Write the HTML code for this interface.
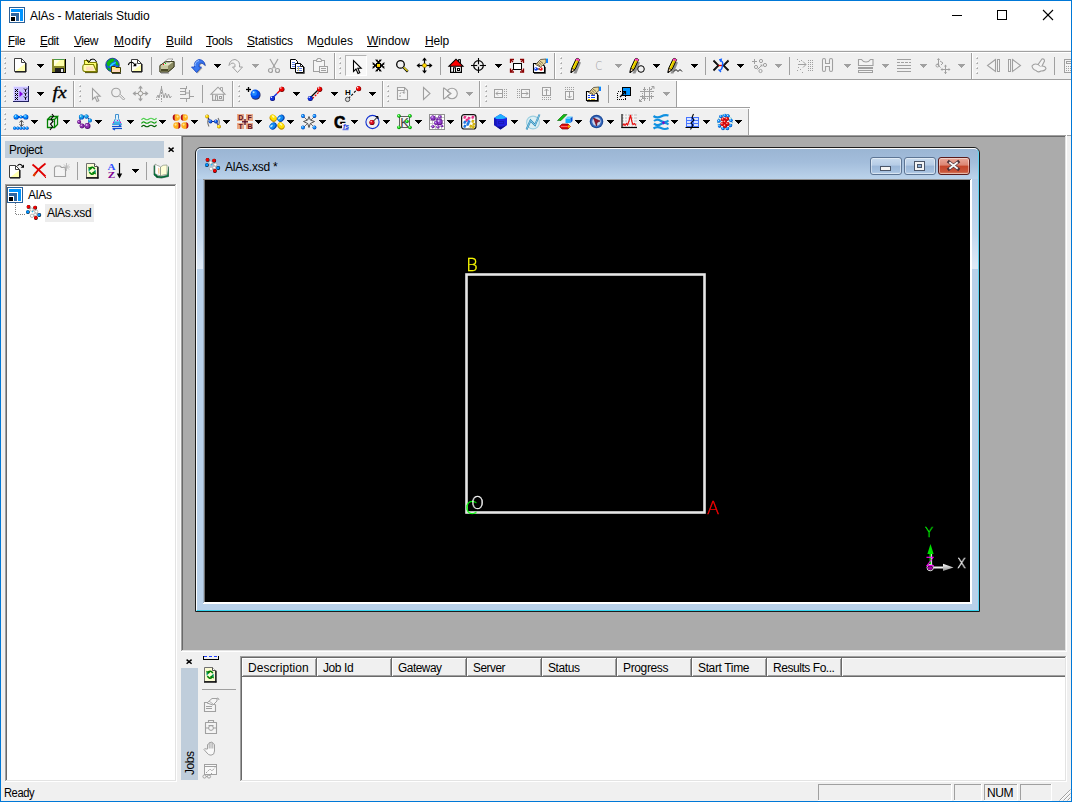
<!DOCTYPE html>
<html lang="en"><head><meta charset="utf-8"><title>AlAs - Materials Studio</title>
<style>
html,body{margin:0;padding:0;}
body{width:1072px;height:802px;overflow:hidden;background:#f0f0f0;font-family:"Liberation Sans",sans-serif;font-size:12px;}
#app{position:relative;width:1072px;height:802px;overflow:hidden;background:#f0f0f0;}
#app div,#app span,#app svg{position:absolute;}
.t{white-space:nowrap;line-height:14px;height:14px;}
.t u{text-decoration:underline;text-underline-offset:1px;text-decoration-thickness:1px;}
svg{overflow:visible;}
.c{shape-rendering:crispEdges;}
</style></head><body><div id="app">
<div style="left:0px;top:0px;width:1072px;height:51px;background:#ffffff;"></div>
<svg style="left:9px;top:7px;" width="16" height="16" viewBox="0 0 16 16"><rect class="c" x="0.5" y="0.5" width="15" height="15" fill="#fff" stroke="#2b5f96" stroke-width="1"/><rect class="c" x="2" y="2" width="12" height="12" fill="#0094ff" /><rect class="c" x="2" y="5" width="9" height="9" fill="#fff" /><rect class="c" x="2" y="6" width="8" height="8" fill="#2f65a0" /><rect class="c" x="2" y="9" width="5" height="5" fill="#fff" /><rect class="c" x="2" y="10" width="4" height="4" fill="#000" /></svg>
<span class="t" style="left:30px;top:9px;font-size:12px;color:#000;letter-spacing:-0.08px;">AlAs - Materials Studio</span>
<svg style="left:952px;top:10px;" width="10" height="10" viewBox="0 0 10 10"><line x1="0" y1="5.5" x2="10" y2="5.5" stroke="#000" stroke-width="1" class="c"/></svg>
<svg style="left:997px;top:10px;" width="10" height="10" viewBox="0 0 10 10"><rect class="c" x="0.5" y="0.5" width="9" height="9" fill="none" stroke="#000" stroke-width="1"/></svg>
<svg style="left:1043px;top:10px;" width="10" height="10" viewBox="0 0 10 10"><line x1="0" y1="0" x2="10" y2="10" stroke="#000" stroke-width="1.1" /><line x1="10" y1="0" x2="0" y2="10" stroke="#000" stroke-width="1.1" /></svg>
<span class="t" style="left:8.0px;top:34px;font-size:12px;color:#000;letter-spacing:-0.45px;transform:scaleX(0.967);transform-origin:0 0;"><u>F</u>ile</span>
<span class="t" style="left:40.0px;top:34px;font-size:12px;color:#000;letter-spacing:-0.45px;transform:scaleX(0.985);transform-origin:0 0;"><u>E</u>dit</span>
<span class="t" style="left:74px;top:34px;font-size:12px;color:#000;letter-spacing:-0.45px;"><u>V</u>iew</span>
<span class="t" style="left:114px;top:34px;font-size:12px;color:#000;letter-spacing:0.33px;"><u>M</u>odify</span>
<span class="t" style="left:166px;top:34px;font-size:12px;color:#000;letter-spacing:-0.08px;"><u>B</u>uild</span>
<span class="t" style="left:206px;top:34px;font-size:12px;color:#000;letter-spacing:-0.3px;"><u>T</u>ools</span>
<span class="t" style="left:247px;top:34px;font-size:12px;color:#000;letter-spacing:-0.22px;"><u>S</u>tatistics</span>
<span class="t" style="left:307px;top:34px;font-size:12px;color:#000;letter-spacing:0.11px;">M<u>o</u>dules</span>
<span class="t" style="left:367px;top:34px;font-size:12px;color:#000;letter-spacing:-0.0px;"><u>W</u>indow</span>
<span class="t" style="left:425px;top:34px;font-size:12px;color:#000;letter-spacing:-0.14px;"><u>H</u>elp</span>
<div style="left:0px;top:50px;width:1072px;height:1px;background:#f0f0f0;"></div>
<div style="left:0px;top:51px;width:1072px;height:1px;background:#a0a0a0;"></div>
<div style="left:0px;top:52px;width:1072px;height:1px;background:#ffffff;"></div>
<div style="left:0px;top:79px;width:1072px;height:1px;background:#a0a0a0;"></div>
<div style="left:0px;top:80px;width:1072px;height:1px;background:#ffffff;"></div>
<div style="left:0px;top:107px;width:1072px;height:1px;background:#a0a0a0;"></div>
<div style="left:0px;top:108px;width:1072px;height:1px;background:#ffffff;"></div>
<div style="left:0px;top:135px;width:1072px;height:1px;background:#a0a0a0;"></div>
<div style="left:677px;top:80px;width:395px;height:27px;background:#ffffff;"></div>
<div style="left:750px;top:107px;width:322px;height:28px;background:#ffffff;"></div>
<div style="left:677px;top:107px;width:73px;height:1px;background:#a0a0a0;"></div>
<div style="left:0px;top:107px;width:750px;height:1px;background:#a0a0a0;"></div>
<div style="left:345px;top:55px;width:22px;height:21px;background:#f8f8f8;border:1px solid #b4b4b4;border-right-color:#fff;border-bottom-color:#fff;box-sizing:border-box;"></div>
<div style="left:4px;top:56px;width:2px;height:2px;background:#fafafa;"></div>
<div style="left:5px;top:57px;width:1px;height:2px;background:#c4c4c4;"></div>
<div style="left:4px;top:58px;width:2px;height:1px;background:#c4c4c4;"></div>
<div style="left:5px;top:58px;width:1px;height:1px;background:#a8a8a8;"></div>
<div style="left:4px;top:61px;width:2px;height:2px;background:#fafafa;"></div>
<div style="left:5px;top:62px;width:1px;height:2px;background:#c4c4c4;"></div>
<div style="left:4px;top:63px;width:2px;height:1px;background:#c4c4c4;"></div>
<div style="left:5px;top:63px;width:1px;height:1px;background:#a8a8a8;"></div>
<div style="left:4px;top:66px;width:2px;height:2px;background:#fafafa;"></div>
<div style="left:5px;top:67px;width:1px;height:2px;background:#c4c4c4;"></div>
<div style="left:4px;top:68px;width:2px;height:1px;background:#c4c4c4;"></div>
<div style="left:5px;top:68px;width:1px;height:1px;background:#a8a8a8;"></div>
<div style="left:4px;top:71px;width:2px;height:2px;background:#fafafa;"></div>
<div style="left:5px;top:72px;width:1px;height:2px;background:#c4c4c4;"></div>
<div style="left:4px;top:73px;width:2px;height:1px;background:#c4c4c4;"></div>
<div style="left:5px;top:73px;width:1px;height:1px;background:#a8a8a8;"></div>
<svg style="left:13px;top:58px;" width="16" height="16" viewBox="0 0 16 16"><path d="M1.5 0.5H8.5L12.5 4.5V13.5H1.5Z" fill="#fff" stroke="#404040" stroke-width="1" /><path d="M2.5 13L12 5.800000000000001V13Z" fill="#ffffb0" /><path d="M8.5 0.5V4.5H12.5" fill="none" stroke="#404040" stroke-width="1" /><path d="M2 14H13V5" fill="none" stroke="#000" stroke-width="1" /></svg>
<svg style="left:37px;top:64px;" width="7" height="4" viewBox="0 0 7 4"><path class="c" d="M0 0h7v1h-1v1h-1v1h-1v1h-1v-1h-1v-1h-1v-1h-1z" fill="#000"/></svg>
<svg style="left:51px;top:58px;" width="16" height="16" viewBox="0 0 16 16"><rect class="c" x="1" y="1" width="14" height="14" fill="#000" /><rect class="c" x="1" y="1" width="13" height="13" fill="#8a8a2a" /><rect class="c" x="3" y="1" width="10" height="7" fill="#ffffb0" /><rect class="c" x="3" y="1" width="10" height="1" fill="#4a9a4a" /><path d="M3 2H13V8H3Z" fill="#ffffa8" /><path d="M3 2H9L3 8Z" fill="#fff" opacity=".7"/><rect class="c" x="4" y="10" width="9" height="5" fill="#202020" /><rect class="c" x="10" y="11" width="2" height="3" fill="#e8e8e8" /><rect class="c" x="14" y="2" width="1" height="13" fill="#000" /><rect class="c" x="2" y="14" width="13" height="1" fill="#000" /></svg>
<div style="left:74px;top:57px;width:1px;height:18px;background:#a0a0a0;"></div>
<svg style="left:82px;top:58px;" width="16" height="16" viewBox="0 0 16 16"><path d="M2.5 2.5H6L8 4.5H14.5V13.5H2.5Z" fill="#ffff70" stroke="#808000" stroke-width="1.1" /><path d="M2.5 6.5H11.5L14.5 13.5H3Q0.8 13.5 0.8 11V8.5Q0.8 6.5 2.5 6.5Z" fill="#ffffb0" stroke="#808000" stroke-width="1.1" /><path d="M4 8.5H10.5L12.5 12.5H4Z" fill="#ffc8c8" opacity=".6"/><path d="M14.5 4Q12.5 -0.5 8 2" fill="none" stroke="#000" stroke-width="1" /><path d="M4.5 1.5L6.5 4.5L9 1.5" fill="none" stroke="#000" stroke-width="1" /><line x1="3" y1="14.6" x2="15.2" y2="14.6" stroke="#505000" stroke-width="1" /><line x1="15.3" y1="5.5" x2="15.3" y2="14.5" stroke="#505000" stroke-width="1" /></svg>
<svg style="left:105px;top:58px;" width="16" height="16" viewBox="0 0 16 16"><circle cx="7.5" cy="7" r="6.8" fill="#1060e0"/><path d="M1.5 5Q4 0.5 8.5 0.5Q10.5 2 8 4Q5 4.5 4.5 8Q2.5 9.5 1.5 5Z" fill="#10b810" /><path d="M2 9.5Q4 9 5.5 11Q5 13.5 3.5 12.5Z" fill="#10b810" /><path d="M10 2Q13.5 3.5 14 7.5Q12 8 10.5 6Q11.5 4 10 2Z" fill="#10b810" /><path d="M4.5 8Q7 4.5 10.5 4L11 5Q8 6 6 9Z" fill="#20e0ff" /><circle cx="7.5" cy="7" r="6.8" fill="none" stroke="#102870" stroke-width="0.7"/><path d="M6.5 8.5H10L11 9.5H15.5V14.5H6.5Z" fill="#ffe880" stroke="#404000" stroke-width="1" /><path d="M7.2 11.5H15V14H7.2Z" fill="#ffd8c0" /><line x1="7" y1="15.3" x2="16" y2="15.3" stroke="#000" stroke-width="0.9" /></svg>
<svg style="left:128px;top:58px;" width="16" height="16" viewBox="0 0 16 16"><path d="M3.5 1.5H9.5L13.5 5.5V13.5H3.5Z" fill="#fff" stroke="#404040" stroke-width="1" /><path d="M4.5 13L13 6.5200000000000005V13Z" fill="#ffffb0" /><path d="M9.5 1.5V5.5H13.5" fill="none" stroke="#404040" stroke-width="1" /><path d="M4 14H14V6" fill="none" stroke="#000" stroke-width="1" /><path d="M0.3 7Q1.5 3.5 4.5 4.5Q6 5 6.8 7" fill="none" stroke="#000" stroke-width="1.1" /><path d="M4.8 8.3H8.3V4.8Z" fill="#000" /></svg>
<div style="left:151px;top:57px;width:1px;height:18px;background:#a0a0a0;"></div>
<svg style="left:159px;top:58px;" width="16" height="16" viewBox="0 0 16 16"><path d="M1 7.5L7 3.5H15V9L9 14H1Z" fill="#a8a880" stroke="#3a3a20" stroke-width="0.9" /><path d="M1 7.5L7 3.5H15L9 8Z" fill="#e4e4c4" /><path d="M5 4L9 1H14L10.5 4.5Z" fill="#fff" stroke="#777" stroke-width="0.6" /><path d="M1 7.5H9V14H1Z" fill="#c8c8a0" /><path d="M9 8L15 3.5V9L9 14Z" fill="#8a8a62" /><rect class="c" x="2" y="11" width="7" height="2" fill="#4a4a28" /><rect class="c" x="2" y="13" width="7" height="1" fill="#a0a070" /><rect class="c" x="4" y="6" width="1" height="1" fill="#f00" /><rect class="c" x="6" y="5" width="1" height="1" fill="#0c0" /><path d="M1 7.5L7 3.5H15V9L9 14H1Z" fill="none" stroke="#3a3a20" stroke-width="0.9" /><line x1="2" y1="15" x2="10" y2="15" stroke="#777" stroke-width="1" /></svg>
<div style="left:182px;top:57px;width:1px;height:18px;background:#a0a0a0;"></div>
<svg style="left:190px;top:58px;" width="16" height="16" viewBox="0 0 16 16"><g transform="translate(1 1)" opacity=".55"><g><path d="M6.5 14.5L1.5 9H4.5Q3.5 3 9 1.5Q14.5 2 15 7.5Q13 4.5 10.5 5Q8.5 6 9 9H11.5Z" fill="#606060" /></g></g><g><path d="M6.5 14.5L1.5 9H4.5Q3.5 3 9 1.5Q14.5 2 15 7.5Q13 4.5 10.5 5Q8.5 6 9 9H11.5Z" fill="#3a78f0" stroke="#1040c0" stroke-width="0.8" /></g><path d="M5 8Q4.5 4 9 2.5" fill="none" stroke="#a0c8ff" stroke-width="1" /></svg>
<svg style="left:214px;top:64px;" width="7" height="4" viewBox="0 0 7 4"><path class="c" d="M0 0h7v1h-1v1h-1v1h-1v1h-1v-1h-1v-1h-1v-1h-1z" fill="#000"/></svg>
<svg style="left:228px;top:58px;" width="16" height="16" viewBox="0 0 16 16"><g transform="translate(16 0) scale(-1 1)"><path d="M6.5 14.5L1.5 9H4.5Q3.5 3 9 1.5Q14.5 2 15 7.5Q13 4.5 10.5 5Q8.5 6 9 9H11.5Z" fill="#f4f4f4" stroke="#a0a0a0" stroke-width="1" /></g></svg>
<svg style="left:252px;top:64px;" width="7" height="4" viewBox="0 0 7 4"><path class="c" d="M0 0h7v1h-1v1h-1v1h-1v1h-1v-1h-1v-1h-1v-1h-1z" fill="#a0a0a0"/></svg>
<svg style="left:266px;top:58px;" width="16" height="16" viewBox="0 0 16 16"><line x1="4" y1="1" x2="9.5" y2="10.5" stroke="#a0a0a0" stroke-width="1.2" /><line x1="12" y1="1" x2="6.5" y2="10.5" stroke="#a0a0a0" stroke-width="1.2" /><circle cx="4.5" cy="12.5" r="2" fill="none" stroke="#a0a0a0" stroke-width="1.2"/><circle cx="11.5" cy="12.5" r="2" fill="none" stroke="#a0a0a0" stroke-width="1.2"/></svg>
<svg style="left:289px;top:58px;" width="16" height="16" viewBox="0 0 16 16"><path d="M1.5 1.5H6.5L8.5 3.5V10.5H1.5Z" fill="#fff" stroke="#000" stroke-width="1" /><rect class="c" x="3" y="4" width="3" height="1" fill="#6080e0" /><rect class="c" x="3" y="6" width="4" height="1" fill="#6080e0" /><rect class="c" x="3" y="8" width="4" height="1" fill="#6080e0" /><path d="M6.5 5.5H11.5L14.5 8.5V14.5H6.5Z" fill="#fff" stroke="#000" stroke-width="1" /><path d="M11.5 5.5V8.5H14.5" fill="none" stroke="#000" stroke-width="0.9" /><rect class="c" x="8" y="8" width="3" height="1" fill="#6080e0" /><rect class="c" x="8" y="10" width="5" height="1" fill="#6080e0" /><rect class="c" x="8" y="12" width="5" height="1" fill="#6080e0" /><rect class="c" x="9" y="9" width="1" height="4" fill="#d0c060" /><line x1="7" y1="15.3" x2="15.3" y2="15.3" stroke="#000" stroke-width="0.8" /><line x1="15.2" y1="9" x2="15.2" y2="15.5" stroke="#000" stroke-width="0.8" /></svg>
<svg style="left:312px;top:58px;" width="16" height="16" viewBox="0 0 16 16"><rect class="c" x="1.6" y="2.6" width="10.8" height="10.8" fill="#f4f4f4" stroke="#a0a0a0" stroke-width="1.2"/><path d="M4.5 3.5V1.5H5.5V0.5H8.5V1.5H9.5V3.5Z" fill="#f4f4f4" stroke="#a0a0a0" stroke-width="1" /><rect class="c" x="7.6" y="8.6" width="7.8" height="5.8" fill="#f4f4f4" stroke="#a0a0a0" stroke-width="1.2"/><line x1="9" y1="10.5" x2="14" y2="10.5" stroke="#a0a0a0" stroke-width="1" /><line x1="9" y1="12.5" x2="14" y2="12.5" stroke="#a0a0a0" stroke-width="1" /></svg>
<div style="left:334px;top:53px;width:1px;height:26px;background:#a0a0a0;"></div>
<div style="left:335px;top:53px;width:1px;height:26px;background:#ffffff;"></div>
<div style="left:339px;top:56px;width:2px;height:2px;background:#fafafa;"></div>
<div style="left:340px;top:57px;width:1px;height:2px;background:#c4c4c4;"></div>
<div style="left:339px;top:58px;width:2px;height:1px;background:#c4c4c4;"></div>
<div style="left:340px;top:58px;width:1px;height:1px;background:#a8a8a8;"></div>
<div style="left:339px;top:61px;width:2px;height:2px;background:#fafafa;"></div>
<div style="left:340px;top:62px;width:1px;height:2px;background:#c4c4c4;"></div>
<div style="left:339px;top:63px;width:2px;height:1px;background:#c4c4c4;"></div>
<div style="left:340px;top:63px;width:1px;height:1px;background:#a8a8a8;"></div>
<div style="left:339px;top:66px;width:2px;height:2px;background:#fafafa;"></div>
<div style="left:340px;top:67px;width:1px;height:2px;background:#c4c4c4;"></div>
<div style="left:339px;top:68px;width:2px;height:1px;background:#c4c4c4;"></div>
<div style="left:340px;top:68px;width:1px;height:1px;background:#a8a8a8;"></div>
<div style="left:339px;top:71px;width:2px;height:2px;background:#fafafa;"></div>
<div style="left:340px;top:72px;width:1px;height:2px;background:#c4c4c4;"></div>
<div style="left:339px;top:73px;width:2px;height:1px;background:#c4c4c4;"></div>
<div style="left:340px;top:73px;width:1px;height:1px;background:#a8a8a8;"></div>
<svg style="left:349px;top:58px;" width="16" height="16" viewBox="0 0 16 16"><path d="M4.5 2.5V13.5L7 11L9 15.5L10.8 14.7L8.8 10.3H12.2Z" fill="#fff" stroke="#000" stroke-width="1.1" /></svg>
<svg style="left:371px;top:58px;" width="16" height="16" viewBox="0 0 16 16"><line x1="7.5" y1="3" x2="7.5" y2="12" stroke="#000" stroke-width="1.4" /><line x1="3" y1="7.5" x2="12" y2="7.5" stroke="#000" stroke-width="1.4" /><path d="M4.800000000000001 7.3L2.2 5.3L2.4000000000000004 6.9" fill="none" stroke="#000" stroke-width="1.1" /><path d="M4.800000000000001 7.7L2.2 9.7L2.4000000000000004 8.1" fill="none" stroke="#000" stroke-width="1.1" /><path d="M10.200000000000001 7.7L12.8 9.7L12.600000000000001 8.1" fill="none" stroke="#000" stroke-width="1.1" /><path d="M10.200000000000001 7.3L12.8 5.3L12.600000000000001 6.9" fill="none" stroke="#000" stroke-width="1.1" /><path d="M7.7 4.800000000000001L9.7 2.2L8.1 2.4000000000000004" fill="none" stroke="#000" stroke-width="1.1" /><path d="M7.3 4.800000000000001L5.3 2.2L6.9 2.4000000000000004" fill="none" stroke="#000" stroke-width="1.1" /><path d="M7.3 10.200000000000001L5.3 12.8L6.9 12.600000000000001" fill="none" stroke="#000" stroke-width="1.1" /><path d="M7.7 10.200000000000001L9.7 12.8L8.1 12.600000000000001" fill="none" stroke="#000" stroke-width="1.1" /><rect class="c" x="5" y="5" width="5" height="5" fill="#000" /><rect class="c" x="6" y="6" width="3" height="3" fill="#ffe000" /><rect class="c" x="6" y="8" width="3" height="1" fill="#ffc000" /></svg>
<svg style="left:394px;top:58px;" width="16" height="16" viewBox="0 0 16 16"><circle cx="6.5" cy="6.4" r="3.8" fill="none" stroke="#000" stroke-width="1.3"/><line x1="9.6" y1="9.5" x2="13.8" y2="13.7" stroke="#000" stroke-width="2.4" /><line x1="9.7" y1="9.2" x2="13.6" y2="13.1" stroke="#f0e020" stroke-width="1.3" /></svg>
<svg style="left:417px;top:58px;" width="16" height="16" viewBox="0 0 16 16"><g transform="translate(-.5 -.5)"><line x1="8" y1="1" x2="8" y2="15" stroke="#000" stroke-width="1.2" /><line x1="1" y1="8" x2="15" y2="8" stroke="#000" stroke-width="1.2" /><path d="M8 0L10.4 3.12L5.6 3.12Z" fill="#000" /><path d="M8 16L5.6 12.879999999999999L10.4 12.879999999999999Z" fill="#000" /><path d="M0 8L3.12 5.6L3.12 10.4Z" fill="#000" /><path d="M16 8L12.879999999999999 10.4L12.879999999999999 5.6Z" fill="#000" /><circle cx="8" cy="8" r="2.1" fill="#ffd800" stroke="#806000" stroke-width="0.6"/></g></svg>
<div style="left:440px;top:57px;width:1px;height:18px;background:#a0a0a0;"></div>
<svg style="left:448px;top:58px;" width="16" height="16" viewBox="0 0 16 16"><path d="M10.5 4V1.5H12.5V6" fill="#a0a0a0" stroke="#000" stroke-width="0.9" /><path d="M2.6 8V14.4H13.4V8" fill="#fff" stroke="#000" stroke-width="1.2" /><path d="M1 8.2L8 1.2L15 8.2Z" fill="#f00" stroke="#000" stroke-width="1.1" /><path d="M5.5 14V9.8H7.5V14" fill="#fff" stroke="#000" stroke-width="1.1" /><rect class="c" x="9.5" y="10.0" width="2" height="2" fill="#fff" stroke="#000" stroke-width="1"/></svg>
<svg style="left:470px;top:58px;" width="16" height="16" viewBox="0 0 16 16"><circle cx="8.5" cy="7.5" r="4.8" fill="none" stroke="#000" stroke-width="1.2"/><line x1="8.5" y1="0" x2="8.5" y2="15" stroke="#000" stroke-width="1.1" /><line x1="1" y1="7.5" x2="16" y2="7.5" stroke="#000" stroke-width="1.1" /><circle cx="8.5" cy="7.5" r="1.3" fill="#f0f0f0"/></svg>
<svg style="left:495px;top:64px;" width="7" height="4" viewBox="0 0 7 4"><path class="c" d="M0 0h7v1h-1v1h-1v1h-1v1h-1v-1h-1v-1h-1v-1h-1z" fill="#000"/></svg>
<svg style="left:509px;top:58px;" width="16" height="16" viewBox="0 0 16 16"><rect class="c" x="4.7" y="5.7" width="7.6" height="5.6" fill="#fff" stroke="#000" stroke-width="1.4"/><path d="M1.5 5V1.5H5" fill="none" stroke="#8a0000" stroke-width="1.3" /><path d="M11 1.5H14.5V5" fill="none" stroke="#8a0000" stroke-width="1.3" /><path d="M1.5 10.5V14H5" fill="none" stroke="#8a0000" stroke-width="1.3" /><path d="M11 14H14.5V10.5" fill="none" stroke="#8a0000" stroke-width="1.3" /><path d="M1.5 1.5L4 4" fill="none" stroke="#8a0000" stroke-width="1.3" /><path d="M14.5 1.5L12 4" fill="none" stroke="#8a0000" stroke-width="1.3" /><path d="M1.5 14L4 11.5" fill="none" stroke="#8a0000" stroke-width="1.3" /><path d="M14.5 14L12 11.5" fill="none" stroke="#8a0000" stroke-width="1.3" /></svg>
<svg style="left:532px;top:58px;" width="16" height="16" viewBox="0 0 16 16"><path d="M1.5 5.5H9L12.5 8V14.5H1.5Z" fill="#fff" stroke="#000" stroke-width="1.1" /><line x1="2" y1="15.5" x2="13.5" y2="15.5" stroke="#555" stroke-width="1" /><line x1="13.5" y1="9" x2="13.5" y2="15.5" stroke="#555" stroke-width="1" /><line x1="4" y1="11" x2="9" y2="11" stroke="#000" stroke-width="1" /><circle cx="4" cy="11" r="1.8" fill="#1040f0"/><circle cx="9" cy="11" r="1.8" fill="#f01010"/><circle cx="3.5" cy="10.5" r="0.6" fill="#fff"/><circle cx="8.5" cy="10.5" r="0.6" fill="#fff"/><path d="M3.5 6.5L8.5 1.5L14 1V4.5L10.5 7.5L8.5 9Z" fill="#e8d8a0" stroke="#4a4030" stroke-width="0.8" /><path d="M5 5.5L8 8M6.5 4.2L9.5 6.8M8 3L11 5.5" fill="none" stroke="#605030" stroke-width="0.8" /><rect class="c" x="14" y="0" width="2" height="5" fill="#1080ff" /><rect class="c" x="14" y="0" width="2" height="1" fill="#80e0ff" /></svg>
<div style="left:554px;top:53px;width:1px;height:26px;background:#a0a0a0;"></div>
<div style="left:555px;top:53px;width:1px;height:26px;background:#ffffff;"></div>
<div style="left:560px;top:56px;width:2px;height:2px;background:#fafafa;"></div>
<div style="left:561px;top:57px;width:1px;height:2px;background:#c4c4c4;"></div>
<div style="left:560px;top:58px;width:2px;height:1px;background:#c4c4c4;"></div>
<div style="left:561px;top:58px;width:1px;height:1px;background:#a8a8a8;"></div>
<div style="left:560px;top:61px;width:2px;height:2px;background:#fafafa;"></div>
<div style="left:561px;top:62px;width:1px;height:2px;background:#c4c4c4;"></div>
<div style="left:560px;top:63px;width:2px;height:1px;background:#c4c4c4;"></div>
<div style="left:561px;top:63px;width:1px;height:1px;background:#a8a8a8;"></div>
<div style="left:560px;top:66px;width:2px;height:2px;background:#fafafa;"></div>
<div style="left:561px;top:67px;width:1px;height:2px;background:#c4c4c4;"></div>
<div style="left:560px;top:68px;width:2px;height:1px;background:#c4c4c4;"></div>
<div style="left:561px;top:68px;width:1px;height:1px;background:#a8a8a8;"></div>
<div style="left:560px;top:71px;width:2px;height:2px;background:#fafafa;"></div>
<div style="left:561px;top:72px;width:1px;height:2px;background:#c4c4c4;"></div>
<div style="left:560px;top:73px;width:2px;height:1px;background:#c4c4c4;"></div>
<div style="left:561px;top:73px;width:1px;height:1px;background:#a8a8a8;"></div>
<svg style="left:568px;top:58px;" width="16" height="16" viewBox="0 0 16 16"><g transform="translate(0 0)"><path d="M5.5 15.5L10.5 3.5L13 4.5L8.5 15.5Z" fill="#909090" /><path d="M3 14.8L3.6 10.5L8.2 0.8Q9.8 -0.3 11.6 1.6L7 11.6Z" fill="#ffe800" stroke="#000" stroke-width="1" /><path d="M8.2 0.8Q9.8 -0.3 11.6 1.6L10.8 3.4L7.5 2.2Z" fill="#ff40c0" /><path d="M3.6 10.5L7 11.6L3 14.8Z" fill="#f8d8b0" stroke="#000" stroke-width="0.8" /><path d="M3 14.8L3.3 12.8L4.5 13.6Z" fill="#000" /><line x1="6" y1="10.5" x2="10" y2="2" stroke="#c0a000" stroke-width="0.8" /></g></svg>
<svg style="left:591px;top:58px;" width="16" height="16" viewBox="0 0 16 16"><text x="4.3" y="11.8" font-size="11.5" font-weight="200" font-family="DejaVu Sans Light, DejaVu Sans, sans-serif" fill="#9c9c9c" textLength="7" lengthAdjust="spacingAndGlyphs">C</text></svg>
<svg style="left:615px;top:64px;" width="7" height="4" viewBox="0 0 7 4"><path class="c" d="M0 0h7v1h-1v1h-1v1h-1v1h-1v-1h-1v-1h-1v-1h-1z" fill="#a0a0a0"/></svg>
<svg style="left:629px;top:58px;" width="16" height="16" viewBox="0 0 16 16"><g transform="translate(-2 0)"><path d="M5.5 15.5L10.5 3.5L13 4.5L8.5 15.5Z" fill="#909090" /><path d="M3 14.8L3.6 10.5L8.2 0.8Q9.8 -0.3 11.6 1.6L7 11.6Z" fill="#ffe800" stroke="#000" stroke-width="1" /><path d="M8.2 0.8Q9.8 -0.3 11.6 1.6L10.8 3.4L7.5 2.2Z" fill="#ff40c0" /><path d="M3.6 10.5L7 11.6L3 14.8Z" fill="#f8d8b0" stroke="#000" stroke-width="0.8" /><path d="M3 14.8L3.3 12.8L4.5 13.6Z" fill="#000" /><line x1="6" y1="10.5" x2="10" y2="2" stroke="#c0a000" stroke-width="0.8" /></g><circle cx="12" cy="11" r="3.3" fill="#f0f0f0" stroke="#000" stroke-width="1"/></svg>
<svg style="left:653px;top:64px;" width="7" height="4" viewBox="0 0 7 4"><path class="c" d="M0 0h7v1h-1v1h-1v1h-1v1h-1v-1h-1v-1h-1v-1h-1z" fill="#000"/></svg>
<svg style="left:667px;top:58px;" width="16" height="16" viewBox="0 0 16 16"><g transform="translate(-2 0)"><path d="M5.5 15.5L10.5 3.5L13 4.5L8.5 15.5Z" fill="#909090" /><path d="M3 14.8L3.6 10.5L8.2 0.8Q9.8 -0.3 11.6 1.6L7 11.6Z" fill="#ffe800" stroke="#000" stroke-width="1" /><path d="M8.2 0.8Q9.8 -0.3 11.6 1.6L10.8 3.4L7.5 2.2Z" fill="#ff40c0" /><path d="M3.6 10.5L7 11.6L3 14.8Z" fill="#f8d8b0" stroke="#000" stroke-width="0.8" /><path d="M3 14.8L3.3 12.8L4.5 13.6Z" fill="#000" /><line x1="6" y1="10.5" x2="10" y2="2" stroke="#c0a000" stroke-width="0.8" /></g><path d="M7 13.5L9 11.5L11 13.5L13 11.5L15 13.5" fill="none" stroke="#000" stroke-width="1" /></svg>
<svg style="left:691px;top:64px;" width="7" height="4" viewBox="0 0 7 4"><path class="c" d="M0 0h7v1h-1v1h-1v1h-1v1h-1v-1h-1v-1h-1v-1h-1z" fill="#000"/></svg>
<div style="left:705px;top:57px;width:1px;height:18px;background:#a0a0a0;"></div>
<svg style="left:713px;top:58px;" width="16" height="16" viewBox="0 0 16 16"><path d="M0.5 2.5L5.5 7.5L0.5 12.5" fill="none" stroke="#000" stroke-width="1.8" /><path d="M15.5 2.5L10.5 7.5L15.5 12.5" fill="none" stroke="#000" stroke-width="1.8" /><path d="M0.5 2L6 7.5L0.5 13" fill="none" stroke="#888" stroke-width="0.6" stroke-dasharray="1 1"/><path d="M15.5 2L10 7.5L15.5 13" fill="none" stroke="#888" stroke-width="0.6" stroke-dasharray="1 1"/><line x1="5.5" y1="7.5" x2="9" y2="7.5" stroke="#f00000" stroke-width="1.3" /><path d="M7 2.5Q10.5 3 9.5 7.5Q9 12 6.5 12.5" fill="none" stroke="#1060ff" stroke-width="1.5" /><path d="M6 1.2L9.24 0.5700000000000001L7.4399999999999995 4.17Z" fill="#1060ff" /><path d="M8.5 0.5L6 1.5L8.5 3.5Z" fill="#1060ff" /><path d="M5.5 11.5L8 14" fill="none" stroke="#1060ff" stroke-width="1.3" /></svg>
<svg style="left:737px;top:64px;" width="7" height="4" viewBox="0 0 7 4"><path class="c" d="M0 0h7v1h-1v1h-1v1h-1v1h-1v-1h-1v-1h-1v-1h-1z" fill="#000"/></svg>
<svg style="left:751px;top:58px;" width="16" height="16" viewBox="0 0 16 16"><line x1="1" y1="3.5" x2="6" y2="3.5" stroke="#a0a0a0" stroke-width="1" /><line x1="3.5" y1="1" x2="3.5" y2="6" stroke="#a0a0a0" stroke-width="1" /><circle cx="10" cy="3" r="1.6" fill="none" stroke="#a0a0a0" stroke-width="1"/><circle cx="14" cy="7" r="1.6" fill="none" stroke="#a0a0a0" stroke-width="1"/><circle cx="5" cy="9" r="1.6" fill="none" stroke="#a0a0a0" stroke-width="1"/><circle cx="9.5" cy="13" r="1.6" fill="none" stroke="#a0a0a0" stroke-width="1"/><line x1="6.5" y1="11.5" x2="11" y2="7" stroke="#a0a0a0" stroke-width="1" /><path d="M11.5 6.5L11.184999999999999 8.915L9.085 6.815Z" fill="#a0a0a0" /></svg>
<svg style="left:775px;top:64px;" width="7" height="4" viewBox="0 0 7 4"><path class="c" d="M0 0h7v1h-1v1h-1v1h-1v1h-1v-1h-1v-1h-1v-1h-1z" fill="#a0a0a0"/></svg>
<div style="left:789px;top:57px;width:1px;height:18px;background:#a0a0a0;"></div>
<svg style="left:797px;top:58px;" width="16" height="16" viewBox="0 0 16 16"><rect class="c" x="11" y="2" width="1" height="1" fill="#a0a0a0" /><rect class="c" x="11" y="4" width="1" height="1" fill="#a0a0a0" /><rect class="c" x="11" y="6" width="1" height="1" fill="#a0a0a0" /><rect class="c" x="11" y="8" width="1" height="1" fill="#a0a0a0" /><rect class="c" x="11" y="10" width="1" height="1" fill="#a0a0a0" /><rect class="c" x="11" y="12" width="1" height="1" fill="#a0a0a0" /><rect class="c" x="13" y="2" width="1" height="1" fill="#a0a0a0" /><rect class="c" x="13" y="4" width="1" height="1" fill="#a0a0a0" /><rect class="c" x="13" y="6" width="1" height="1" fill="#a0a0a0" /><rect class="c" x="13" y="8" width="1" height="1" fill="#a0a0a0" /><rect class="c" x="13" y="10" width="1" height="1" fill="#a0a0a0" /><rect class="c" x="13" y="12" width="1" height="1" fill="#a0a0a0" /><rect class="c" x="15" y="2" width="1" height="1" fill="#a0a0a0" /><rect class="c" x="15" y="4" width="1" height="1" fill="#a0a0a0" /><rect class="c" x="15" y="6" width="1" height="1" fill="#a0a0a0" /><rect class="c" x="15" y="8" width="1" height="1" fill="#a0a0a0" /><rect class="c" x="15" y="10" width="1" height="1" fill="#a0a0a0" /><rect class="c" x="15" y="12" width="1" height="1" fill="#a0a0a0" /><rect class="c" x="0" y="1" width="1" height="1" fill="#a0a0a0" /><rect class="c" x="2" y="3" width="1" height="1" fill="#a0a0a0" /><rect class="c" x="1" y="9" width="1" height="1" fill="#a0a0a0" /><rect class="c" x="3" y="11" width="1" height="1" fill="#a0a0a0" /><rect class="c" x="0" y="12" width="1" height="1" fill="#a0a0a0" /><rect class="c" x="5" y="14" width="1" height="1" fill="#a0a0a0" /><rect class="c" x="4" y="2" width="1" height="1" fill="#a0a0a0" /><line x1="1" y1="6.5" x2="9" y2="6.5" stroke="#a0a0a0" stroke-width="1" /><path d="M6 3.5L9 6.5L6 9.5" fill="none" stroke="#a0a0a0" stroke-width="1" /></svg>
<svg style="left:820px;top:58px;" width="16" height="16" viewBox="0 0 16 16"><path d="M2.5 2Q2.5 0.5 4 0.5Q5.5 0.5 5.5 2V5.5H9.5V2Q9.5 0.5 11 0.5Q12.5 0.5 12.5 2V12Q12.5 13.5 11 13.5Q9.5 13.5 9.5 12V8.5H5.5V12Q5.5 13.5 4 13.5Q2.5 13.5 2.5 12Z" fill="#f4f4f4" stroke="#a0a0a0" stroke-width="1.1" /></svg>
<svg style="left:844px;top:64px;" width="7" height="4" viewBox="0 0 7 4"><path class="c" d="M0 0h7v1h-1v1h-1v1h-1v1h-1v-1h-1v-1h-1v-1h-1z" fill="#a0a0a0"/></svg>
<svg style="left:858px;top:58px;" width="16" height="16" viewBox="0 0 16 16"><path d="M0.5 1.5H3.5Q5 4 8 4Q11 4 12.5 1.5H15V7.5H0.5Z" fill="#f4f4f4" stroke="#a0a0a0" stroke-width="1.1" /><rect class="c" x="0.5" y="9.5" width="14" height="1" fill="#f4f4f4" stroke="#a0a0a0" stroke-width="1"/><rect class="c" x="0.5" y="12.5" width="14" height="2" fill="#f4f4f4" stroke="#a0a0a0" stroke-width="1"/></svg>
<svg style="left:882px;top:64px;" width="7" height="4" viewBox="0 0 7 4"><path class="c" d="M0 0h7v1h-1v1h-1v1h-1v1h-1v-1h-1v-1h-1v-1h-1z" fill="#a0a0a0"/></svg>
<svg style="left:896px;top:58px;" width="16" height="16" viewBox="0 0 16 16"><line x1="1" y1="1.5" x2="15" y2="1.5" stroke="#a0a0a0" stroke-width="1" /><line x1="1" y1="4.5" x2="15" y2="4.5" stroke="#a0a0a0" stroke-width="1" stroke-dasharray="3 1"/><line x1="1" y1="7.5" x2="15" y2="7.5" stroke="#a0a0a0" stroke-width="1" /><line x1="1" y1="10.5" x2="15" y2="10.5" stroke="#a0a0a0" stroke-width="1" /><line x1="1" y1="13.5" x2="15" y2="13.5" stroke="#a0a0a0" stroke-width="1" /></svg>
<svg style="left:920px;top:64px;" width="7" height="4" viewBox="0 0 7 4"><path class="c" d="M0 0h7v1h-1v1h-1v1h-1v1h-1v-1h-1v-1h-1v-1h-1z" fill="#a0a0a0"/></svg>
<svg style="left:935px;top:58px;" width="16" height="16" viewBox="0 0 16 16"><line x1="3.5" y1="1" x2="3.5" y2="8" stroke="#a0a0a0" stroke-width="1" /><path d="M3.5 0L5.1 2.08L1.9 2.08Z" fill="#a0a0a0" /><path d="M2 6L6 10" fill="none" stroke="#a0a0a0" stroke-width="1" stroke-dasharray="2 1"/><circle cx="2.5" cy="7.5" r="1.5" fill="none" stroke="#a0a0a0" stroke-width="1"/><line x1="6" y1="11.5" x2="15" y2="11.5" stroke="#a0a0a0" stroke-width="1" /><line x1="10.5" y1="7" x2="10.5" y2="16" stroke="#a0a0a0" stroke-width="1" /><path d="M15.5 11.5L13.55 13.0L13.55 10.0Z" fill="#a0a0a0" /><path d="M5.5 11.5L7.45 10.0L7.45 13.0Z" fill="#a0a0a0" /><path d="M10.5 6.5L12.0 8.45L9.0 8.45Z" fill="#a0a0a0" /><path d="M10.5 16L9.0 14.05L12.0 14.05Z" fill="#a0a0a0" /><path d="M5 3L8 5L6 7" fill="none" stroke="#a0a0a0" stroke-width="1" /></svg>
<svg style="left:958px;top:64px;" width="7" height="4" viewBox="0 0 7 4"><path class="c" d="M0 0h7v1h-1v1h-1v1h-1v1h-1v-1h-1v-1h-1v-1h-1z" fill="#a0a0a0"/></svg>
<div style="left:971px;top:53px;width:1px;height:26px;background:#a0a0a0;"></div>
<div style="left:972px;top:53px;width:1px;height:26px;background:#ffffff;"></div>
<div style="left:976px;top:56px;width:2px;height:2px;background:#fafafa;"></div>
<div style="left:977px;top:57px;width:1px;height:2px;background:#c4c4c4;"></div>
<div style="left:976px;top:58px;width:2px;height:1px;background:#c4c4c4;"></div>
<div style="left:977px;top:58px;width:1px;height:1px;background:#a8a8a8;"></div>
<div style="left:976px;top:61px;width:2px;height:2px;background:#fafafa;"></div>
<div style="left:977px;top:62px;width:1px;height:2px;background:#c4c4c4;"></div>
<div style="left:976px;top:63px;width:2px;height:1px;background:#c4c4c4;"></div>
<div style="left:977px;top:63px;width:1px;height:1px;background:#a8a8a8;"></div>
<div style="left:976px;top:66px;width:2px;height:2px;background:#fafafa;"></div>
<div style="left:977px;top:67px;width:1px;height:2px;background:#c4c4c4;"></div>
<div style="left:976px;top:68px;width:2px;height:1px;background:#c4c4c4;"></div>
<div style="left:977px;top:68px;width:1px;height:1px;background:#a8a8a8;"></div>
<div style="left:976px;top:71px;width:2px;height:2px;background:#fafafa;"></div>
<div style="left:977px;top:72px;width:1px;height:2px;background:#c4c4c4;"></div>
<div style="left:976px;top:73px;width:2px;height:1px;background:#c4c4c4;"></div>
<div style="left:977px;top:73px;width:1px;height:1px;background:#a8a8a8;"></div>
<svg style="left:986px;top:58px;" width="16" height="16" viewBox="0 0 16 16"><path d="M9.5 1.5L1.5 7.5L9.5 13.5Z" fill="#f4f4f4" stroke="#a0a0a0" stroke-width="1.1" /><rect class="c" x="11.5" y="1.5" width="2" height="12" fill="#f4f4f4" stroke="#a0a0a0" stroke-width="1"/></svg>
<svg style="left:1007px;top:58px;" width="16" height="16" viewBox="0 0 16 16"><path d="M5.5 1.5L13.5 7.5L5.5 13.5Z" fill="#f4f4f4" stroke="#a0a0a0" stroke-width="1.1" /><rect class="c" x="1.5" y="1.5" width="2" height="12" fill="#f4f4f4" stroke="#a0a0a0" stroke-width="1"/></svg>
<svg style="left:1031px;top:58px;" width="16" height="16" viewBox="0 0 16 16"><path d="M1 8Q3 5 7 6.5L11 1Q13.5 0.5 13.5 3L11 8Q14.5 8 15 10.5Q14 13 10 13Q7 15 5 12.5Q1.5 11.5 1 8Z" fill="#f4f4f4" stroke="#a0a0a0" stroke-width="1.1" /><line x1="7" y1="6.5" x2="9.5" y2="8.5" stroke="#a0a0a0" stroke-width="1" /></svg>
<div style="left:1054px;top:57px;width:1px;height:18px;background:#a0a0a0;"></div>
<svg style="left:1062px;top:58px;" width="16" height="16" viewBox="0 0 16 16"><rect class="c" x="2.6" y="1.6" width="10.8" height="12.8" fill="#f4f4f4" stroke="#a0a0a0" stroke-width="1.2"/><rect class="c" x="4.5" y="3.5" width="7" height="2" fill="none" stroke="#a0a0a0" stroke-width="1"/><rect class="c" x="4" y="8" width="1" height="1" fill="#a0a0a0" /><rect class="c" x="4" y="10" width="1" height="1" fill="#a0a0a0" /><rect class="c" x="4" y="12" width="1" height="1" fill="#a0a0a0" /><rect class="c" x="6" y="8" width="1" height="1" fill="#a0a0a0" /><rect class="c" x="6" y="10" width="1" height="1" fill="#a0a0a0" /><rect class="c" x="6" y="12" width="1" height="1" fill="#a0a0a0" /><rect class="c" x="8" y="8" width="1" height="1" fill="#a0a0a0" /><rect class="c" x="8" y="10" width="1" height="1" fill="#a0a0a0" /><rect class="c" x="8" y="12" width="1" height="1" fill="#a0a0a0" /><rect class="c" x="10" y="8" width="1" height="1" fill="#a0a0a0" /><rect class="c" x="10" y="10" width="1" height="1" fill="#a0a0a0" /><rect class="c" x="10" y="12" width="1" height="1" fill="#a0a0a0" /></svg>
<div style="left:4px;top:84px;width:2px;height:2px;background:#fafafa;"></div>
<div style="left:5px;top:85px;width:1px;height:2px;background:#c4c4c4;"></div>
<div style="left:4px;top:86px;width:2px;height:1px;background:#c4c4c4;"></div>
<div style="left:5px;top:86px;width:1px;height:1px;background:#a8a8a8;"></div>
<div style="left:4px;top:89px;width:2px;height:2px;background:#fafafa;"></div>
<div style="left:5px;top:90px;width:1px;height:2px;background:#c4c4c4;"></div>
<div style="left:4px;top:91px;width:2px;height:1px;background:#c4c4c4;"></div>
<div style="left:5px;top:91px;width:1px;height:1px;background:#a8a8a8;"></div>
<div style="left:4px;top:94px;width:2px;height:2px;background:#fafafa;"></div>
<div style="left:5px;top:95px;width:1px;height:2px;background:#c4c4c4;"></div>
<div style="left:4px;top:96px;width:2px;height:1px;background:#c4c4c4;"></div>
<div style="left:5px;top:96px;width:1px;height:1px;background:#a8a8a8;"></div>
<div style="left:4px;top:99px;width:2px;height:2px;background:#fafafa;"></div>
<div style="left:5px;top:100px;width:1px;height:2px;background:#c4c4c4;"></div>
<div style="left:4px;top:101px;width:2px;height:1px;background:#c4c4c4;"></div>
<div style="left:5px;top:101px;width:1px;height:1px;background:#a8a8a8;"></div>
<svg style="left:13px;top:86px;" width="16" height="16" viewBox="0 0 16 16"><rect class="c" x="0" y="0" width="16" height="16" fill="#202060" /><rect class="c" x="0" y="0" width="15" height="15" fill="#c8c0ff" /><rect class="c" x="0" y="0" width="15" height="1" fill="#e8e4ff" /><rect class="c" x="0" y="0" width="1" height="15" fill="#e8e4ff" /><line x1="2" y1="3" x2="5" y2="6" stroke="#000" stroke-width="1" /><line x1="5" y1="3" x2="2" y2="6" stroke="#000" stroke-width="1" /><line x1="2" y1="7" x2="5" y2="10" stroke="#000" stroke-width="1" /><line x1="5" y1="7" x2="2" y2="10" stroke="#000" stroke-width="1" /><line x1="2" y1="11" x2="5" y2="14" stroke="#000" stroke-width="1" /><line x1="5" y1="11" x2="2" y2="14" stroke="#000" stroke-width="1" /><path d="M11 2.5L12.5 4.0L14 2.5M12.5 4.0V5.8" fill="none" stroke="#000" stroke-width="1" /><path d="M11 6.5L12.5 8.0L14 6.5M12.5 8.0V9.8" fill="none" stroke="#000" stroke-width="1" /><path d="M11 10.5L12.5 12.0L14 10.5M12.5 12.0V13.8" fill="none" stroke="#000" stroke-width="1" /><path d="M6.5 5L10 8L6.5 11Z" fill="#8000e0" /></svg>
<svg style="left:37px;top:92px;" width="7" height="4" viewBox="0 0 7 4"><path class="c" d="M0 0h7v1h-1v1h-1v1h-1v1h-1v-1h-1v-1h-1v-1h-1z" fill="#000"/></svg>
<svg style="left:51px;top:86px;" width="16" height="16" viewBox="0 0 16 16"><text x="1.5" y="11.5" font-size="16" font-style="italic" font-family="Liberation Serif, serif" fill="#000" stroke="#000" stroke-width=".35" textLength="14" lengthAdjust="spacingAndGlyphs">fx</text></svg>
<div style="left:73px;top:81px;width:1px;height:26px;background:#a0a0a0;"></div>
<div style="left:74px;top:81px;width:1px;height:26px;background:#ffffff;"></div>
<div style="left:79px;top:84px;width:2px;height:2px;background:#fafafa;"></div>
<div style="left:80px;top:85px;width:1px;height:2px;background:#c4c4c4;"></div>
<div style="left:79px;top:86px;width:2px;height:1px;background:#c4c4c4;"></div>
<div style="left:80px;top:86px;width:1px;height:1px;background:#a8a8a8;"></div>
<div style="left:79px;top:89px;width:2px;height:2px;background:#fafafa;"></div>
<div style="left:80px;top:90px;width:1px;height:2px;background:#c4c4c4;"></div>
<div style="left:79px;top:91px;width:2px;height:1px;background:#c4c4c4;"></div>
<div style="left:80px;top:91px;width:1px;height:1px;background:#a8a8a8;"></div>
<div style="left:79px;top:94px;width:2px;height:2px;background:#fafafa;"></div>
<div style="left:80px;top:95px;width:1px;height:2px;background:#c4c4c4;"></div>
<div style="left:79px;top:96px;width:2px;height:1px;background:#c4c4c4;"></div>
<div style="left:80px;top:96px;width:1px;height:1px;background:#a8a8a8;"></div>
<div style="left:79px;top:99px;width:2px;height:2px;background:#fafafa;"></div>
<div style="left:80px;top:100px;width:1px;height:2px;background:#c4c4c4;"></div>
<div style="left:79px;top:101px;width:2px;height:1px;background:#c4c4c4;"></div>
<div style="left:80px;top:101px;width:1px;height:1px;background:#a8a8a8;"></div>
<svg style="left:88px;top:86px;" width="16" height="16" viewBox="0 0 16 16"><path d="M4.5 2.5V13.5L7 11L9 15.5L10.8 14.7L8.8 10.3H12.2Z" fill="#f4f4f4" stroke="#a0a0a0" stroke-width="1.1" /></svg>
<svg style="left:110px;top:86px;" width="16" height="16" viewBox="0 0 16 16"><circle cx="6" cy="6.5" r="4.3" fill="none" stroke="#a0a0a0" stroke-width="1.1"/><path d="M9 9.5L13.5 14L14.7 12.8L10.2 8.3" fill="#f4f4f4" stroke="#a0a0a0" stroke-width="1" /></svg>
<svg style="left:133px;top:86px;" width="16" height="16" viewBox="0 0 16 16"><g transform="translate(-.5 -.5)"><line x1="8" y1="1" x2="8" y2="15" stroke="#a0a0a0" stroke-width="1.2" /><line x1="1" y1="8" x2="15" y2="8" stroke="#a0a0a0" stroke-width="1.2" /><path d="M8 0L10.4 3.12L5.6 3.12Z" fill="#a0a0a0" /><path d="M8 16L5.6 12.879999999999999L10.4 12.879999999999999Z" fill="#a0a0a0" /><path d="M0 8L3.12 5.6L3.12 10.4Z" fill="#a0a0a0" /><path d="M16 8L12.879999999999999 10.4L12.879999999999999 5.6Z" fill="#a0a0a0" /><circle cx="8" cy="8" r="2.1" fill="#f0f0f0" stroke="#806000" stroke-width="0.6"/><circle cx="8" cy="8" r="2.2" fill="#f0f0f0" stroke="#a0a0a0" stroke-width="1"/></g></svg>
<svg style="left:156px;top:86px;" width="16" height="16" viewBox="0 0 16 16"><path d="M0.5 12L2 9L3 12L5.5 2L8 12L9.5 7L11 12L12.5 8L14 12L15.5 10" fill="none" stroke="#a0a0a0" stroke-width="1" /><line x1="5.5" y1="0" x2="5.5" y2="16" stroke="#a0a0a0" stroke-width="1" stroke-dasharray="2 1"/><line x1="0" y1="13.5" x2="4" y2="13.5" stroke="#a0a0a0" stroke-width="1" stroke-dasharray="1 1"/></svg>
<svg style="left:179px;top:86px;" width="16" height="16" viewBox="0 0 16 16"><path d="M1 2.5H6.5V5.5H1M1 8.5H6.5V5.5M6.5 7H10.5V4M10.5 7V10.5H15M1 12.5H10.5V10" fill="none" stroke="#a0a0a0" stroke-width="1.1" /><line x1="7.5" y1="0" x2="7.5" y2="3" stroke="#a0a0a0" stroke-width="1" /><line x1="7.5" y1="13" x2="7.5" y2="16" stroke="#a0a0a0" stroke-width="1" /></svg>
<div style="left:202px;top:85px;width:1px;height:18px;background:#a0a0a0;"></div>
<svg style="left:210px;top:86px;" width="16" height="16" viewBox="0 0 16 16"><path d="M10.5 4V1.5H12.5V6" fill="#f4f4f4" stroke="#a0a0a0" stroke-width="0.9" /><path d="M2.6 8V14.4H13.4V8" fill="#f4f4f4" stroke="#a0a0a0" stroke-width="1.2" /><path d="M1 8.2L8 1.2L15 8.2Z" fill="#f4f4f4" stroke="#a0a0a0" stroke-width="1.1" /><path d="M5.5 14V9.8H7.5V14" fill="#f4f4f4" stroke="#a0a0a0" stroke-width="1.1" /><rect class="c" x="9.5" y="10.0" width="2" height="2" fill="#f4f4f4" stroke="#a0a0a0" stroke-width="1"/></svg>
<div style="left:232px;top:81px;width:1px;height:26px;background:#a0a0a0;"></div>
<div style="left:233px;top:81px;width:1px;height:26px;background:#ffffff;"></div>
<div style="left:238px;top:84px;width:2px;height:2px;background:#fafafa;"></div>
<div style="left:239px;top:85px;width:1px;height:2px;background:#c4c4c4;"></div>
<div style="left:238px;top:86px;width:2px;height:1px;background:#c4c4c4;"></div>
<div style="left:239px;top:86px;width:1px;height:1px;background:#a8a8a8;"></div>
<div style="left:238px;top:89px;width:2px;height:2px;background:#fafafa;"></div>
<div style="left:239px;top:90px;width:1px;height:2px;background:#c4c4c4;"></div>
<div style="left:238px;top:91px;width:2px;height:1px;background:#c4c4c4;"></div>
<div style="left:239px;top:91px;width:1px;height:1px;background:#a8a8a8;"></div>
<div style="left:238px;top:94px;width:2px;height:2px;background:#fafafa;"></div>
<div style="left:239px;top:95px;width:1px;height:2px;background:#c4c4c4;"></div>
<div style="left:238px;top:96px;width:2px;height:1px;background:#c4c4c4;"></div>
<div style="left:239px;top:96px;width:1px;height:1px;background:#a8a8a8;"></div>
<div style="left:238px;top:99px;width:2px;height:2px;background:#fafafa;"></div>
<div style="left:239px;top:100px;width:1px;height:2px;background:#c4c4c4;"></div>
<div style="left:238px;top:101px;width:2px;height:1px;background:#c4c4c4;"></div>
<div style="left:239px;top:101px;width:1px;height:1px;background:#a8a8a8;"></div>
<svg style="left:246px;top:86px;" width="16" height="16" viewBox="0 0 16 16"><line x1="0" y1="3.5" x2="5" y2="3.5" stroke="#000" stroke-width="1.3" /><line x1="2.5" y1="1" x2="2.5" y2="6" stroke="#000" stroke-width="1.3" /><circle cx="9.8" cy="9" r="4.8" fill="#303060"/><circle cx="9.2" cy="8.2" r="4.6" fill="#0050f0"/><circle cx="8.2" cy="7.2" r="2.6" fill="#2088ff"/><circle cx="7.6" cy="6.2" r="1" fill="#c0e0ff"/></svg>
<svg style="left:269px;top:86px;" width="16" height="16" viewBox="0 0 16 16"><line x1="3.5" y1="12" x2="8" y2="7.5" stroke="#1030e0" stroke-width="1.4" /><line x1="8" y1="7.5" x2="12.5" y2="3" stroke="#f00000" stroke-width="1.4" /><circle cx="3.5" cy="12.5" r="2.5" fill="#000060"/><circle cx="3.2" cy="12.2" r="2.2" fill="#1030e0"/><circle cx="2.45" cy="11.325" r="0.75" fill="#fff"/><circle cx="12.9" cy="3.3" r="2.6" fill="#700000"/><circle cx="12.6" cy="3" r="2.3000000000000003" fill="#f00000"/><circle cx="11.82" cy="2.09" r="0.78" fill="#fff"/></svg>
<svg style="left:293px;top:92px;" width="7" height="4" viewBox="0 0 7 4"><path class="c" d="M0 0h7v1h-1v1h-1v1h-1v1h-1v-1h-1v-1h-1v-1h-1z" fill="#000"/></svg>
<svg style="left:307px;top:86px;" width="16" height="16" viewBox="0 0 16 16"><line x1="3.5" y1="11.5" x2="12" y2="3" stroke="#000" stroke-width="1.2" /><line x1="5.5" y1="12.5" x2="13.5" y2="4.5" stroke="#f00000" stroke-width="1.2" stroke-dasharray="2 1.3"/><circle cx="3.3" cy="12.5" r="2.5" fill="#000060"/><circle cx="3" cy="12.2" r="2.2" fill="#1030e0"/><circle cx="2.25" cy="11.325" r="0.75" fill="#fff"/><circle cx="12.700000000000001" cy="3.3" r="2.6" fill="#700000"/><circle cx="12.4" cy="3" r="2.3000000000000003" fill="#f00000"/><circle cx="11.620000000000001" cy="2.09" r="0.78" fill="#fff"/></svg>
<svg style="left:331px;top:92px;" width="7" height="4" viewBox="0 0 7 4"><path class="c" d="M0 0h7v1h-1v1h-1v1h-1v1h-1v-1h-1v-1h-1v-1h-1z" fill="#000"/></svg>
<svg style="left:345px;top:86px;" width="16" height="16" viewBox="0 0 16 16"><text x="0" y="9.3" font-size="8" font-weight="bold" font-family="Liberation Sans, sans-serif" fill="#000">H</text><line x1="3.5" y1="12.5" x2="12.5" y2="3" stroke="#000" stroke-width="1.1" stroke-dasharray="2.5 1.5"/><circle cx="2.6" cy="13.4" r="2.2" fill="#d8d8d8" stroke="#505050" stroke-width="1"/><circle cx="13.700000000000001" cy="2.8" r="2.5" fill="#700000"/><circle cx="13.4" cy="2.5" r="2.2" fill="#f00000"/><circle cx="12.65" cy="1.625" r="0.75" fill="#fff"/></svg>
<svg style="left:369px;top:92px;" width="7" height="4" viewBox="0 0 7 4"><path class="c" d="M0 0h7v1h-1v1h-1v1h-1v1h-1v-1h-1v-1h-1v-1h-1z" fill="#000"/></svg>
<div style="left:382px;top:81px;width:1px;height:26px;background:#a0a0a0;"></div>
<div style="left:383px;top:81px;width:1px;height:26px;background:#ffffff;"></div>
<div style="left:387px;top:84px;width:2px;height:2px;background:#fafafa;"></div>
<div style="left:388px;top:85px;width:1px;height:2px;background:#c4c4c4;"></div>
<div style="left:387px;top:86px;width:2px;height:1px;background:#c4c4c4;"></div>
<div style="left:388px;top:86px;width:1px;height:1px;background:#a8a8a8;"></div>
<div style="left:387px;top:89px;width:2px;height:2px;background:#fafafa;"></div>
<div style="left:388px;top:90px;width:1px;height:2px;background:#c4c4c4;"></div>
<div style="left:387px;top:91px;width:2px;height:1px;background:#c4c4c4;"></div>
<div style="left:388px;top:91px;width:1px;height:1px;background:#a8a8a8;"></div>
<div style="left:387px;top:94px;width:2px;height:2px;background:#fafafa;"></div>
<div style="left:388px;top:95px;width:1px;height:2px;background:#c4c4c4;"></div>
<div style="left:387px;top:96px;width:2px;height:1px;background:#c4c4c4;"></div>
<div style="left:388px;top:96px;width:1px;height:1px;background:#a8a8a8;"></div>
<div style="left:387px;top:99px;width:2px;height:2px;background:#fafafa;"></div>
<div style="left:388px;top:100px;width:1px;height:2px;background:#c4c4c4;"></div>
<div style="left:387px;top:101px;width:2px;height:1px;background:#c4c4c4;"></div>
<div style="left:388px;top:101px;width:1px;height:1px;background:#a8a8a8;"></div>
<svg style="left:395px;top:86px;" width="16" height="16" viewBox="0 0 16 16"><path d="M2.5 1.5H9.5L12.5 4.5V13.5H2.5Z" fill="#f4f4f4" stroke="#a0a0a0" stroke-width="1.1" /><path d="M3 4.5H9.5V1.5" fill="none" stroke="#a0a0a0" stroke-width="1" /><path d="M5 11V8Q5 6.5 7 6.5H10M8.5 5L10 6.5L8.5 8" fill="none" stroke="#a0a0a0" stroke-width="1" stroke-dasharray="2 1"/></svg>
<svg style="left:419px;top:86px;" width="16" height="16" viewBox="0 0 16 16"><path d="M4.5 1.5L11 7.5L4.5 13.5Z" fill="#f4f4f4" stroke="#a0a0a0" stroke-width="1.1" /></svg>
<svg style="left:442px;top:86px;" width="16" height="16" viewBox="0 0 16 16"><circle cx="10" cy="7.5" r="5.3" fill="#f4f4f4" stroke="#a0a0a0" stroke-width="1.1"/><path d="M1.5 1.5V13.5M2 2L9 7.5L2 13" fill="#f4f4f4" stroke="#a0a0a0" stroke-width="1.1" /><path d="M5 5L8.5 7.5L5 10" fill="none" stroke="#a0a0a0" stroke-width="1" /></svg>
<svg style="left:466px;top:92px;" width="7" height="4" viewBox="0 0 7 4"><path class="c" d="M0 0h7v1h-1v1h-1v1h-1v1h-1v-1h-1v-1h-1v-1h-1z" fill="#a0a0a0"/></svg>
<div style="left:479px;top:81px;width:1px;height:26px;background:#a0a0a0;"></div>
<div style="left:480px;top:81px;width:1px;height:26px;background:#ffffff;"></div>
<div style="left:485px;top:84px;width:2px;height:2px;background:#fafafa;"></div>
<div style="left:486px;top:85px;width:1px;height:2px;background:#c4c4c4;"></div>
<div style="left:485px;top:86px;width:2px;height:1px;background:#c4c4c4;"></div>
<div style="left:486px;top:86px;width:1px;height:1px;background:#a8a8a8;"></div>
<div style="left:485px;top:89px;width:2px;height:2px;background:#fafafa;"></div>
<div style="left:486px;top:90px;width:1px;height:2px;background:#c4c4c4;"></div>
<div style="left:485px;top:91px;width:2px;height:1px;background:#c4c4c4;"></div>
<div style="left:486px;top:91px;width:1px;height:1px;background:#a8a8a8;"></div>
<div style="left:485px;top:94px;width:2px;height:2px;background:#fafafa;"></div>
<div style="left:486px;top:95px;width:1px;height:2px;background:#c4c4c4;"></div>
<div style="left:485px;top:96px;width:2px;height:1px;background:#c4c4c4;"></div>
<div style="left:486px;top:96px;width:1px;height:1px;background:#a8a8a8;"></div>
<div style="left:485px;top:99px;width:2px;height:2px;background:#fafafa;"></div>
<div style="left:486px;top:100px;width:1px;height:2px;background:#c4c4c4;"></div>
<div style="left:485px;top:101px;width:2px;height:1px;background:#c4c4c4;"></div>
<div style="left:486px;top:101px;width:1px;height:1px;background:#a8a8a8;"></div>
<svg style="left:493px;top:86px;" width="16" height="16" viewBox="0 0 16 16"><rect class="c" x="1.6" y="3.6" width="7.8" height="7.8" fill="#f4f4f4" stroke="#a0a0a0" stroke-width="1.2"/><line x1="3" y1="7.5" x2="9" y2="7.5" stroke="#a0a0a0" stroke-width="1" /><path d="M5 5.5L3 7.5L5 9.5" fill="none" stroke="#a0a0a0" stroke-width="1" /><rect class="c" x="11" y="3" width="1" height="1" fill="#a0a0a0" /><rect class="c" x="11" y="5" width="1" height="1" fill="#a0a0a0" /><rect class="c" x="11" y="7" width="1" height="1" fill="#a0a0a0" /><rect class="c" x="11" y="9" width="1" height="1" fill="#a0a0a0" /><rect class="c" x="11" y="11" width="1" height="1" fill="#a0a0a0" /><rect class="c" x="13" y="3" width="1" height="1" fill="#a0a0a0" /><rect class="c" x="13" y="5" width="1" height="1" fill="#a0a0a0" /><rect class="c" x="13" y="7" width="1" height="1" fill="#a0a0a0" /><rect class="c" x="13" y="9" width="1" height="1" fill="#a0a0a0" /><rect class="c" x="13" y="11" width="1" height="1" fill="#a0a0a0" /></svg>
<svg style="left:515px;top:86px;" width="16" height="16" viewBox="0 0 16 16"><rect class="c" x="6.6" y="3.6" width="7.8" height="7.8" fill="#f4f4f4" stroke="#a0a0a0" stroke-width="1.2"/><line x1="6" y1="7.5" x2="13" y2="7.5" stroke="#a0a0a0" stroke-width="1" /><path d="M11 5.5L13 7.5L11 9.5" fill="none" stroke="#a0a0a0" stroke-width="1" /><rect class="c" x="2" y="3" width="1" height="1" fill="#a0a0a0" /><rect class="c" x="2" y="5" width="1" height="1" fill="#a0a0a0" /><rect class="c" x="2" y="7" width="1" height="1" fill="#a0a0a0" /><rect class="c" x="2" y="9" width="1" height="1" fill="#a0a0a0" /><rect class="c" x="2" y="11" width="1" height="1" fill="#a0a0a0" /><rect class="c" x="4" y="3" width="1" height="1" fill="#a0a0a0" /><rect class="c" x="4" y="5" width="1" height="1" fill="#a0a0a0" /><rect class="c" x="4" y="7" width="1" height="1" fill="#a0a0a0" /><rect class="c" x="4" y="9" width="1" height="1" fill="#a0a0a0" /><rect class="c" x="4" y="11" width="1" height="1" fill="#a0a0a0" /></svg>
<svg style="left:539px;top:86px;" width="16" height="16" viewBox="0 0 16 16"><rect class="c" x="3.6" y="1.6" width="7.8" height="7.8" fill="#f4f4f4" stroke="#a0a0a0" stroke-width="1.2"/><line x1="7.5" y1="3" x2="7.5" y2="9" stroke="#a0a0a0" stroke-width="1" /><path d="M5.5 5L7.5 3L9.5 5" fill="none" stroke="#a0a0a0" stroke-width="1" /><rect class="c" x="3" y="11" width="1" height="1" fill="#a0a0a0" /><rect class="c" x="3" y="13" width="1" height="1" fill="#a0a0a0" /><rect class="c" x="5" y="11" width="1" height="1" fill="#a0a0a0" /><rect class="c" x="5" y="13" width="1" height="1" fill="#a0a0a0" /><rect class="c" x="7" y="11" width="1" height="1" fill="#a0a0a0" /><rect class="c" x="7" y="13" width="1" height="1" fill="#a0a0a0" /><rect class="c" x="9" y="11" width="1" height="1" fill="#a0a0a0" /><rect class="c" x="9" y="13" width="1" height="1" fill="#a0a0a0" /><rect class="c" x="11" y="11" width="1" height="1" fill="#a0a0a0" /><rect class="c" x="11" y="13" width="1" height="1" fill="#a0a0a0" /></svg>
<svg style="left:561px;top:86px;" width="16" height="16" viewBox="0 0 16 16"><rect class="c" x="4.6" y="5.6" width="7.8" height="7.8" fill="#f4f4f4" stroke="#a0a0a0" stroke-width="1.2"/><line x1="8.5" y1="6" x2="8.5" y2="12" stroke="#a0a0a0" stroke-width="1" /><path d="M6.5 10L8.5 12L10.5 10" fill="none" stroke="#a0a0a0" stroke-width="1" /><rect class="c" x="4" y="1" width="1" height="1" fill="#a0a0a0" /><rect class="c" x="4" y="3" width="1" height="1" fill="#a0a0a0" /><rect class="c" x="6" y="1" width="1" height="1" fill="#a0a0a0" /><rect class="c" x="6" y="3" width="1" height="1" fill="#a0a0a0" /><rect class="c" x="8" y="1" width="1" height="1" fill="#a0a0a0" /><rect class="c" x="8" y="3" width="1" height="1" fill="#a0a0a0" /><rect class="c" x="10" y="1" width="1" height="1" fill="#a0a0a0" /><rect class="c" x="10" y="3" width="1" height="1" fill="#a0a0a0" /><rect class="c" x="12" y="1" width="1" height="1" fill="#a0a0a0" /><rect class="c" x="12" y="3" width="1" height="1" fill="#a0a0a0" /></svg>
<svg style="left:585px;top:86px;" width="16" height="16" viewBox="0 0 16 16"><path d="M1.5 5.5H9L12.5 8V14.5H1.5Z" fill="#fff" stroke="#000" stroke-width="1.1" /><line x1="2" y1="15.5" x2="13.5" y2="15.5" stroke="#555" stroke-width="1" /><line x1="13.5" y1="9" x2="13.5" y2="15.5" stroke="#555" stroke-width="1" /><rect class="c" x="3" y="9" width="2" height="1" fill="#1040f0" /><rect class="c" x="6" y="9" width="4" height="1" fill="#1040f0" /><rect class="c" x="3" y="11" width="2" height="1" fill="#1040f0" /><rect class="c" x="6" y="11" width="4" height="1" fill="#1040f0" /><rect class="c" x="3" y="13" width="2" height="1" fill="#e0c000" /><rect class="c" x="6" y="13" width="4" height="1" fill="#e0c000" /><path d="M3.5 6.5L8.5 1.5L14 1V4.5L10.5 7.5L8.5 9Z" fill="#e8d8a0" stroke="#4a4030" stroke-width="0.8" /><path d="M5 5.5L8 8M6.5 4.2L9.5 6.8M8 3L11 5.5" fill="none" stroke="#605030" stroke-width="0.8" /><rect class="c" x="14" y="0" width="2" height="5" fill="#1080ff" /><rect class="c" x="14" y="0" width="2" height="1" fill="#80e0ff" /></svg>
<div style="left:608px;top:85px;width:1px;height:18px;background:#a0a0a0;"></div>
<svg style="left:616px;top:86px;" width="16" height="16" viewBox="0 0 16 16"><rect class="c" x="1.5" y="5.5" width="8" height="8" fill="none" stroke="#000" stroke-width="1" stroke-dasharray="1 1"/><rect class="c" x="6.6" y="1.6" width="7.8" height="7.8" fill="#0094ff" stroke="#000" stroke-width="1.2"/><line x1="4" y1="11" x2="9" y2="6" stroke="#000" stroke-width="1.2" /><path d="M6.5 5.5H9.5V8.5" fill="none" stroke="#000" stroke-width="1.2" /></svg>
<svg style="left:639px;top:86px;" width="16" height="16" viewBox="0 0 16 16"><line x1="5.5" y1="1" x2="5.5" y2="15" stroke="#a0a0a0" stroke-width="1" /><line x1="10.5" y1="1" x2="10.5" y2="15" stroke="#a0a0a0" stroke-width="1" /><line x1="1" y1="5.5" x2="15" y2="5.5" stroke="#a0a0a0" stroke-width="1" /><line x1="1" y1="10.5" x2="15" y2="10.5" stroke="#a0a0a0" stroke-width="1" /><rect class="c" x="3.5" y="3.5" width="9" height="9" fill="none" stroke="#a0a0a0" stroke-width="1" stroke-dasharray="1 1"/><path d="M11 4L15 0.5M12.5 0.5H15V3" fill="none" stroke="#a0a0a0" stroke-width="1" /><path d="M4.5 11.5L0.5 15.5M0.5 13V15.5H3" fill="none" stroke="#a0a0a0" stroke-width="1" /></svg>
<svg style="left:663px;top:92px;" width="7" height="4" viewBox="0 0 7 4"><path class="c" d="M0 0h7v1h-1v1h-1v1h-1v1h-1v-1h-1v-1h-1v-1h-1z" fill="#a0a0a0"/></svg>
<div style="left:676px;top:81px;width:1px;height:26px;background:#a0a0a0;"></div>
<div style="left:677px;top:81px;width:1px;height:26px;background:#ffffff;"></div>
<div style="left:4px;top:112px;width:2px;height:2px;background:#fafafa;"></div>
<div style="left:5px;top:113px;width:1px;height:2px;background:#c4c4c4;"></div>
<div style="left:4px;top:114px;width:2px;height:1px;background:#c4c4c4;"></div>
<div style="left:5px;top:114px;width:1px;height:1px;background:#a8a8a8;"></div>
<div style="left:4px;top:117px;width:2px;height:2px;background:#fafafa;"></div>
<div style="left:5px;top:118px;width:1px;height:2px;background:#c4c4c4;"></div>
<div style="left:4px;top:119px;width:2px;height:1px;background:#c4c4c4;"></div>
<div style="left:5px;top:119px;width:1px;height:1px;background:#a8a8a8;"></div>
<div style="left:4px;top:122px;width:2px;height:2px;background:#fafafa;"></div>
<div style="left:5px;top:123px;width:1px;height:2px;background:#c4c4c4;"></div>
<div style="left:4px;top:124px;width:2px;height:1px;background:#c4c4c4;"></div>
<div style="left:5px;top:124px;width:1px;height:1px;background:#a8a8a8;"></div>
<div style="left:4px;top:127px;width:2px;height:2px;background:#fafafa;"></div>
<div style="left:5px;top:128px;width:1px;height:2px;background:#c4c4c4;"></div>
<div style="left:4px;top:129px;width:2px;height:1px;background:#c4c4c4;"></div>
<div style="left:5px;top:129px;width:1px;height:1px;background:#a8a8a8;"></div>
<svg style="left:13px;top:114px;" width="16" height="16" viewBox="0 0 16 16"><rect class="c" x="4" y="2" width="8" height="2" fill="#0060e0" /><circle cx="3.2" cy="3" r="2.6" fill="#0040c0"/><circle cx="2.8880000000000003" cy="2.688" r="2.132" fill="#0090ff"/><circle cx="2.42" cy="2.09" r="0.8320000000000001" fill="#c0f0ff"/><circle cx="12.8" cy="3" r="2.6" fill="#0040c0"/><circle cx="12.488000000000001" cy="2.688" r="2.132" fill="#0090ff"/><circle cx="12.020000000000001" cy="2.09" r="0.8320000000000001" fill="#c0f0ff"/><circle cx="8" cy="3" r="1.6" fill="#0040c0"/><circle cx="7.808" cy="2.808" r="1.312" fill="#0090ff"/><circle cx="7.52" cy="2.44" r="0.512" fill="#c0f0ff"/><line x1="8.5" y1="6.5" x2="8.5" y2="12" stroke="#555" stroke-width="1.1" /><path d="M6.5 8.5L8.5 6.2L10.5 8.5M6.5 10.2L8.5 12.5L10.5 10.2" fill="none" stroke="#555" stroke-width="1" /><circle cx="1.7" cy="14.2" r="1.6" fill="#0040c0"/><circle cx="1.508" cy="14.008" r="1.312" fill="#0090ff"/><circle cx="1.22" cy="13.639999999999999" r="0.512" fill="#c0f0ff"/><circle cx="4.8" cy="14.2" r="1.6" fill="#0040c0"/><circle cx="4.608" cy="14.008" r="1.312" fill="#0090ff"/><circle cx="4.32" cy="13.639999999999999" r="0.512" fill="#c0f0ff"/><circle cx="7.9" cy="14.2" r="1.6" fill="#0040c0"/><circle cx="7.708" cy="14.008" r="1.312" fill="#0090ff"/><circle cx="7.42" cy="13.639999999999999" r="0.512" fill="#c0f0ff"/><circle cx="11.0" cy="14.2" r="1.6" fill="#0040c0"/><circle cx="10.808" cy="14.008" r="1.312" fill="#0090ff"/><circle cx="10.52" cy="13.639999999999999" r="0.512" fill="#c0f0ff"/><circle cx="14.1" cy="14.2" r="1.6" fill="#0040c0"/><circle cx="13.908" cy="14.008" r="1.312" fill="#0090ff"/><circle cx="13.62" cy="13.639999999999999" r="0.512" fill="#c0f0ff"/></svg>
<svg style="left:31px;top:120px;" width="7" height="4" viewBox="0 0 7 4"><path class="c" d="M0 0h7v1h-1v1h-1v1h-1v1h-1v-1h-1v-1h-1v-1h-1z" fill="#000"/></svg>
<svg style="left:45px;top:114px;" width="16" height="16" viewBox="0 0 16 16"><path d="M2.5 5.5H9.5V13.5H2.5ZM2.5 5.5L5.5 2.5H12.5L9.5 5.5M12.5 2.5V10.5L9.5 13.5" fill="none" stroke="#008000" stroke-width="1.3" /><path d="M7 0L8.5 2L6 5L8 7.5L5.5 10L7.5 12.5L5 16" fill="none" stroke="#000" stroke-width="1.1" /></svg>
<svg style="left:63px;top:120px;" width="7" height="4" viewBox="0 0 7 4"><path class="c" d="M0 0h7v1h-1v1h-1v1h-1v1h-1v-1h-1v-1h-1v-1h-1z" fill="#000"/></svg>
<svg style="left:77px;top:114px;" width="16" height="16" viewBox="0 0 16 16"><path d="M4 3L9 2L13 6L10 12L4.5 12L2 8Z" fill="none" stroke="#303080" stroke-width="1" /><circle cx="4.5" cy="3" r="2.6" fill="#0050c0"/><circle cx="4.188" cy="2.688" r="2.132" fill="#10a0e8"/><circle cx="3.7199999999999998" cy="2.09" r="0.8320000000000001" fill="#c0f0ff"/><circle cx="9.5" cy="2.6" r="2.2" fill="#0050c0"/><circle cx="9.236" cy="2.3360000000000003" r="1.804" fill="#10a0e8"/><circle cx="8.84" cy="1.83" r="0.7040000000000001" fill="#c0f0ff"/><circle cx="13" cy="6.5" r="2" fill="#0050c0"/><circle cx="12.76" cy="6.26" r="1.64" fill="#10a0e8"/><circle cx="12.4" cy="5.8" r="0.64" fill="#c0f0ff"/><circle cx="2.2" cy="8" r="2" fill="#501070"/><circle cx="1.9600000000000002" cy="7.76" r="1.64" fill="#9030b0"/><circle cx="1.6" cy="7.3" r="0.64" fill="#e0b0f0"/><circle cx="5" cy="12" r="2.4" fill="#501070"/><circle cx="4.712" cy="11.712" r="1.9679999999999997" fill="#9030b0"/><circle cx="4.28" cy="11.16" r="0.768" fill="#e0b0f0"/><circle cx="10.5" cy="12" r="3" fill="#501070"/><circle cx="10.14" cy="11.64" r="2.46" fill="#9030b0"/><circle cx="9.6" cy="10.95" r="0.96" fill="#e0b0f0"/></svg>
<svg style="left:95px;top:120px;" width="7" height="4" viewBox="0 0 7 4"><path class="c" d="M0 0h7v1h-1v1h-1v1h-1v1h-1v-1h-1v-1h-1v-1h-1z" fill="#000"/></svg>
<svg style="left:109px;top:114px;" width="16" height="16" viewBox="0 0 16 16"><path d="M6.5 0.5H9.5V4.5L12.5 10.5H3.5L6.5 4.5Z" fill="#b8e0f8" stroke="#4090d0" stroke-width="1" /><path d="M5 7.5H11L12.5 10.5H3.5Z" fill="#40b0e8" /><rect class="c" x="7" y="1" width="2" height="4" fill="#e0f4ff" /><rect class="c" x="4" y="8" width="1" height="1" fill="#f000c0" /><rect class="c" x="11" y="8" width="1" height="1" fill="#f000c0" /><rect class="c" x="8" y="6" width="1" height="1" fill="#f000c0" /><line x1="3" y1="12.5" x2="12" y2="12.5" stroke="#1050d0" stroke-width="1.2" /><line x1="4" y1="14.5" x2="13" y2="14.5" stroke="#1050d0" stroke-width="1.2" /><path d="M10 11L12.5 12.5" fill="none" stroke="#1050d0" stroke-width="1.2" /><path d="M6 16L3.5 14.5" fill="none" stroke="#1050d0" stroke-width="1.2" /></svg>
<svg style="left:127px;top:120px;" width="7" height="4" viewBox="0 0 7 4"><path class="c" d="M0 0h7v1h-1v1h-1v1h-1v1h-1v-1h-1v-1h-1v-1h-1z" fill="#000"/></svg>
<svg style="left:141px;top:114px;" width="16" height="16" viewBox="0 0 16 16"><path d="M0.5 6Q2 3.5 4 5T8 5T12 5T15.5 4" fill="none" stroke="#50d050" stroke-width="1.2" /><path d="M0.5 9.5Q2 7.0 4 8.5T8 8.5T12 8.5T15.5 7.5" fill="none" stroke="#10a010" stroke-width="1.2" /><path d="M0.5 13Q2 10.5 4 12T8 12T12 12T15.5 11" fill="none" stroke="#006000" stroke-width="1.2" /></svg>
<svg style="left:159px;top:120px;" width="7" height="4" viewBox="0 0 7 4"><path class="c" d="M0 0h7v1h-1v1h-1v1h-1v1h-1v-1h-1v-1h-1v-1h-1z" fill="#000"/></svg>
<svg style="left:173px;top:114px;" width="16" height="16" viewBox="0 0 16 16"><circle cx="3.6" cy="3.6" r="3.3" fill="#ffb020"/><circle cx="4.6" cy="2.6" r="1.1" fill="#ffe890"/><path d="M3.0 0.30000000000000027A3.3 3.3 0 0 0 3.0 6.9A1.4 3.3 0 0 1 3.0 0.30000000000000027Z" fill="#b00818" /><circle cx="11.6" cy="3.6" r="3.3" fill="#ffb020"/><circle cx="12.6" cy="2.6" r="1.1" fill="#ffe890"/><path d="M11.0 0.30000000000000027A3.3 3.3 0 0 0 11.0 6.9A1.4 3.3 0 0 1 11.0 0.30000000000000027Z" fill="#b00818" /><circle cx="3.6" cy="11.6" r="3.3" fill="#ffb020"/><circle cx="2.6" cy="10.6" r="1.1" fill="#ffe890"/><path d="M4.2 8.3A3.3 3.3 0 0 1 4.2 14.899999999999999A1.4 3.3 0 0 0 4.2 8.3Z" fill="#b00818" /><circle cx="11.6" cy="11.6" r="3.3" fill="#ffb020"/><circle cx="10.6" cy="10.6" r="1.1" fill="#ffe890"/><path d="M12.2 8.3A3.3 3.3 0 0 1 12.2 14.899999999999999A1.4 3.3 0 0 0 12.2 8.3Z" fill="#b00818" /></svg>
<svg style="left:191px;top:120px;" width="7" height="4" viewBox="0 0 7 4"><path class="c" d="M0 0h7v1h-1v1h-1v1h-1v1h-1v-1h-1v-1h-1v-1h-1z" fill="#000"/></svg>
<svg style="left:205px;top:114px;" width="16" height="16" viewBox="0 0 16 16"><path d="M4 4Q1.5 8 4 12.5" fill="none" stroke="#707070" stroke-width="1.1" /><path d="M13 4Q15.5 8 13 12.5" fill="none" stroke="#707070" stroke-width="1.1" /><path d="M2 2.5L5.5 7.5H11L14 12.5" fill="none" stroke="#202080" stroke-width="1" /><circle cx="2.2" cy="2.5" r="1.9" fill="#a07800"/><circle cx="1.9720000000000002" cy="2.2720000000000002" r="1.5579999999999998" fill="#ffd800"/><circle cx="1.6300000000000003" cy="1.835" r="0.608" fill="#fff8c0"/><circle cx="5.5" cy="7.5" r="1.9" fill="#002890"/><circle cx="5.272" cy="7.272" r="1.5579999999999998" fill="#1060f0"/><circle cx="4.93" cy="6.835" r="0.608" fill="#c0f0ff"/><circle cx="11" cy="7.5" r="1.9" fill="#002890"/><circle cx="10.772" cy="7.272" r="1.5579999999999998" fill="#1060f0"/><circle cx="10.43" cy="6.835" r="0.608" fill="#c0f0ff"/><circle cx="14" cy="12.6" r="1.9" fill="#a07800"/><circle cx="13.772" cy="12.372" r="1.5579999999999998" fill="#ffd800"/><circle cx="13.43" cy="11.935" r="0.608" fill="#fff8c0"/></svg>
<svg style="left:223px;top:120px;" width="7" height="4" viewBox="0 0 7 4"><path class="c" d="M0 0h7v1h-1v1h-1v1h-1v1h-1v-1h-1v-1h-1v-1h-1z" fill="#000"/></svg>
<svg style="left:237px;top:114px;" width="16" height="16" viewBox="0 0 16 16"><rect class="c" x="0" y="0" width="7" height="7" fill="#e8a888" /><rect class="c" x="9" y="0" width="7" height="7" fill="#e8a888" /><rect class="c" x="0" y="9" width="7" height="6" fill="#e8a888" /><rect class="c" x="9" y="9" width="7" height="6" fill="#e8a888" /><text x="1.2" y="6.2" font-size="7" font-weight="bold" font-family="Liberation Sans, sans-serif" fill="#601020" >D</text><text x="10.6" y="6.2" font-size="7" font-weight="bold" font-family="Liberation Sans, sans-serif" fill="#601020" >F</text><text x="1.4" y="14.6" font-size="7" font-weight="bold" font-family="Liberation Sans, sans-serif" fill="#601020" >T</text><text x="10.4" y="14.6" font-size="7" font-weight="bold" font-family="Liberation Sans, sans-serif" fill="#601020" >B</text><line x1="5" y1="7.8" x2="11" y2="7.8" stroke="#601020" stroke-width="1.4" /><line x1="8" y1="5" x2="8" y2="11" stroke="#601020" stroke-width="1.4" /></svg>
<svg style="left:255px;top:120px;" width="7" height="4" viewBox="0 0 7 4"><path class="c" d="M0 0h7v1h-1v1h-1v1h-1v1h-1v-1h-1v-1h-1v-1h-1z" fill="#000"/></svg>
<svg style="left:269px;top:114px;" width="16" height="16" viewBox="0 0 16 16"><g transform="rotate(45 4.2 4.2)"><ellipse cx="4.2" cy="4.2" rx="3.9" ry="3.2" fill="#c09000"/><ellipse cx="3.8000000000000003" cy="3.7" rx="3.3" ry="2.6" fill="#ffe000"/><ellipse cx="3.0" cy="3.0" rx="1.6" ry=".9" fill="#fff8b0"/></g><g transform="rotate(45 12 12)"><ellipse cx="12" cy="12" rx="3.9" ry="3.2" fill="#c09000"/><ellipse cx="11.6" cy="11.5" rx="3.3" ry="2.6" fill="#ffe000"/><ellipse cx="10.8" cy="10.8" rx="1.6" ry=".9" fill="#fff8b0"/></g><g transform="rotate(-45 12 4.2)"><ellipse cx="12" cy="4.2" rx="3.9" ry="3.2" fill="#0040b0"/><ellipse cx="11.6" cy="3.7" rx="3.3" ry="2.6" fill="#1088f0"/><ellipse cx="10.8" cy="3.0" rx="1.6" ry=".9" fill="#b0e0ff"/></g><g transform="rotate(-45 4.2 12)"><ellipse cx="4.2" cy="12" rx="3.9" ry="3.2" fill="#0040b0"/><ellipse cx="3.8000000000000003" cy="11.5" rx="3.3" ry="2.6" fill="#1088f0"/><ellipse cx="3.0" cy="10.8" rx="1.6" ry=".9" fill="#b0e0ff"/></g></svg>
<svg style="left:287px;top:120px;" width="7" height="4" viewBox="0 0 7 4"><path class="c" d="M0 0h7v1h-1v1h-1v1h-1v1h-1v-1h-1v-1h-1v-1h-1z" fill="#000"/></svg>
<svg style="left:301px;top:114px;" width="16" height="16" viewBox="0 0 16 16"><path d="M8 8L3 3M8 8L13 3M8 8L3 13M8 8L13 13" fill="none" stroke="#707070" stroke-width="1" /><path d="M8 2.5L9.3 6L13.5 7.5L9.3 9.5L8 13.5L6.7 9.5L2.5 7.5L6.7 6Z" fill="#f0f0f0" stroke="#404040" stroke-width="0.9" /><circle cx="2" cy="2" r="1.9" fill="#0040b0"/><circle cx="1.772" cy="1.772" r="1.5579999999999998" fill="#1090ff"/><circle cx="1.4300000000000002" cy="1.335" r="0.608" fill="#c0f0ff"/><circle cx="13.5" cy="2" r="1.9" fill="#0040b0"/><circle cx="13.272" cy="1.772" r="1.5579999999999998" fill="#1090ff"/><circle cx="12.93" cy="1.335" r="0.608" fill="#c0f0ff"/><circle cx="2" cy="13.5" r="1.9" fill="#0040b0"/><circle cx="1.772" cy="13.272" r="1.5579999999999998" fill="#1090ff"/><circle cx="1.4300000000000002" cy="12.835" r="0.608" fill="#c0f0ff"/><circle cx="13.5" cy="13.5" r="1.9" fill="#0040b0"/><circle cx="13.272" cy="13.272" r="1.5579999999999998" fill="#1090ff"/><circle cx="12.93" cy="12.835" r="0.608" fill="#c0f0ff"/></svg>
<svg style="left:319px;top:120px;" width="7" height="4" viewBox="0 0 7 4"><path class="c" d="M0 0h7v1h-1v1h-1v1h-1v1h-1v-1h-1v-1h-1v-1h-1z" fill="#000"/></svg>
<svg style="left:333px;top:114px;" width="16" height="16" viewBox="0 0 16 16"><text x="1" y="13.8" font-size="16.5" font-weight="bold" font-family="Liberation Sans, sans-serif" fill="#000" stroke="#000" stroke-width=".6" textLength="12" lengthAdjust="spacingAndGlyphs">G</text><rect class="c" x="9" y="9" width="7" height="7" fill="#f0f0f0" /><text x="10" y="15" font-size="7" font-weight="bold" font-family="Liberation Sans, sans-serif" fill="#2040e0" font-style="italic">fs</text><line x1="9.5" y1="15.7" x2="15.5" y2="15.7" stroke="#2040e0" stroke-width="0.8" /></svg>
<svg style="left:351px;top:120px;" width="7" height="4" viewBox="0 0 7 4"><path class="c" d="M0 0h7v1h-1v1h-1v1h-1v1h-1v-1h-1v-1h-1v-1h-1z" fill="#000"/></svg>
<svg style="left:365px;top:114px;" width="16" height="16" viewBox="0 0 16 16"><circle cx="7.5" cy="8" r="6.6" fill="none" stroke="#1030d0" stroke-width="1.1"/><line x1="8" y1="7.5" x2="12.5" y2="3" stroke="#000" stroke-width="1" /><path d="M10.5 2.5H13V5" fill="none" stroke="#000" stroke-width="1" /><circle cx="7" cy="8.5" r="2.6" fill="#700010"/><circle cx="6.688" cy="8.188" r="2.132" fill="#e01020"/><circle cx="6.22" cy="7.59" r="0.8320000000000001" fill="#ffb0b0"/></svg>
<svg style="left:383px;top:120px;" width="7" height="4" viewBox="0 0 7 4"><path class="c" d="M0 0h7v1h-1v1h-1v1h-1v1h-1v-1h-1v-1h-1v-1h-1z" fill="#000"/></svg>
<svg style="left:397px;top:114px;" width="16" height="16" viewBox="0 0 16 16"><rect class="c" x="2.6" y="2.6" width="9.8" height="10.8" fill="#f4f4f4" stroke="#606060" stroke-width="1.2"/><text x="3.2" y="13" font-size="13" font-weight="normal" font-family="Liberation Sans, sans-serif" fill="#404040" >K</text><circle cx="2" cy="2" r="1.8" fill="#007000"/><circle cx="1.784" cy="1.784" r="1.476" fill="#20e020"/><circle cx="1.46" cy="1.37" r="0.5760000000000001" fill="#d0ffd0"/><circle cx="13" cy="2" r="1.8" fill="#007000"/><circle cx="12.784" cy="1.784" r="1.476" fill="#20e020"/><circle cx="12.46" cy="1.37" r="0.5760000000000001" fill="#d0ffd0"/><circle cx="2" cy="13.5" r="1.8" fill="#007000"/><circle cx="1.784" cy="13.284" r="1.476" fill="#20e020"/><circle cx="1.46" cy="12.87" r="0.5760000000000001" fill="#d0ffd0"/><circle cx="13" cy="13.5" r="1.8" fill="#007000"/><circle cx="12.784" cy="13.284" r="1.476" fill="#20e020"/><circle cx="12.46" cy="12.87" r="0.5760000000000001" fill="#d0ffd0"/><circle cx="10" cy="7.5" r="1.8" fill="#007000"/><circle cx="9.784" cy="7.284" r="1.476" fill="#20e020"/><circle cx="9.46" cy="6.87" r="0.5760000000000001" fill="#d0ffd0"/></svg>
<svg style="left:415px;top:120px;" width="7" height="4" viewBox="0 0 7 4"><path class="c" d="M0 0h7v1h-1v1h-1v1h-1v1h-1v-1h-1v-1h-1v-1h-1z" fill="#000"/></svg>
<svg style="left:429px;top:114px;" width="16" height="16" viewBox="0 0 16 16"><rect class="c" x="0.5" y="0.5" width="15" height="15" fill="#fff" stroke="#909090" stroke-width="1"/><line x1="3.5" y1="1" x2="3.5" y2="15" stroke="#c8c8c8" stroke-width="1" /><line x1="1" y1="3.5" x2="15" y2="3.5" stroke="#c8c8c8" stroke-width="1" /><line x1="6.5" y1="1" x2="6.5" y2="15" stroke="#c8c8c8" stroke-width="1" /><line x1="1" y1="6.5" x2="15" y2="6.5" stroke="#c8c8c8" stroke-width="1" /><line x1="9.5" y1="1" x2="9.5" y2="15" stroke="#c8c8c8" stroke-width="1" /><line x1="1" y1="9.5" x2="15" y2="9.5" stroke="#c8c8c8" stroke-width="1" /><line x1="12.5" y1="1" x2="12.5" y2="15" stroke="#c8c8c8" stroke-width="1" /><line x1="1" y1="12.5" x2="15" y2="12.5" stroke="#c8c8c8" stroke-width="1" /><circle cx="4" cy="4" r="2.6" fill="#5a1088"/><circle cx="3.688" cy="3.688" r="2.132" fill="#9040c8"/><circle cx="3.2199999999999998" cy="3.09" r="0.8320000000000001" fill="#e0c0f8"/><circle cx="10.5" cy="8" r="3.2" fill="#5a1088"/><circle cx="10.116" cy="7.616" r="2.624" fill="#9040c8"/><circle cx="9.54" cy="6.88" r="1.024" fill="#e0c0f8"/><circle cx="7" cy="9" r="2" fill="#5a1088"/><circle cx="6.76" cy="8.76" r="1.64" fill="#9040c8"/><circle cx="6.4" cy="8.3" r="0.64" fill="#e0c0f8"/><circle cx="4" cy="12.5" r="1.6" fill="#5a1088"/><circle cx="3.808" cy="12.308" r="1.312" fill="#9040c8"/><circle cx="3.52" cy="11.94" r="0.512" fill="#e0c0f8"/><circle cx="11" cy="3" r="1.7" fill="#5a1088"/><circle cx="10.796" cy="2.796" r="1.394" fill="#9040c8"/><circle cx="10.49" cy="2.4050000000000002" r="0.544" fill="#e0c0f8"/><circle cx="9" cy="13" r="1.6" fill="#5a1088"/><circle cx="8.808" cy="12.808" r="1.312" fill="#9040c8"/><circle cx="8.52" cy="12.44" r="0.512" fill="#e0c0f8"/><circle cx="13" cy="12" r="1.3" fill="#5a1088"/><circle cx="12.844" cy="11.844" r="1.066" fill="#9040c8"/><circle cx="12.61" cy="11.545" r="0.41600000000000004" fill="#e0c0f8"/><circle cx="8" cy="5" r="1.3" fill="#5a1088"/><circle cx="7.844" cy="4.844" r="1.066" fill="#9040c8"/><circle cx="7.61" cy="4.545" r="0.41600000000000004" fill="#e0c0f8"/></svg>
<svg style="left:447px;top:120px;" width="7" height="4" viewBox="0 0 7 4"><path class="c" d="M0 0h7v1h-1v1h-1v1h-1v1h-1v-1h-1v-1h-1v-1h-1z" fill="#000"/></svg>
<svg style="left:461px;top:114px;" width="16" height="16" viewBox="0 0 16 16"><rect x="0.6" y="0.6" width="14.4" height="14.4" rx="2.5" fill="#fff" stroke="#101010" stroke-width="1.2"/><path d="M3 2l2.2 .6l-1.4 2.2z M3.5 3l-1.8 1.5" fill="#e02880" stroke="#e02880" stroke-width="0.8" /><path d="M7 3l2.2 .6l-1.4 2.2z M7.5 4l-1.8 1.5" fill="#e02880" stroke="#e02880" stroke-width="0.8" /><path d="M11 2l2.2 .6l-1.4 2.2z M11.5 3l-1.8 1.5" fill="#e02880" stroke="#e02880" stroke-width="0.8" /><path d="M5 5l2.2 .6l-1.4 2.2z M5.5 6l-1.8 1.5" fill="#e02880" stroke="#e02880" stroke-width="0.8" /><path d="M3 7l2.2 .6l-1.4 2.2z M3.5 8l-1.8 1.5" fill="#1070e0" stroke="#1070e0" stroke-width="0.8" /><path d="M6 9l2.2 .6l-1.4 2.2z M6.5 10l-1.8 1.5" fill="#1070e0" stroke="#1070e0" stroke-width="0.8" /><path d="M3 11l2.2 .6l-1.4 2.2z M3.5 12l-1.8 1.5" fill="#1070e0" stroke="#1070e0" stroke-width="0.8" /><path d="M7 6.5l2.2 .6l-1.4 2.2z M7.5 7.5l-1.8 1.5" fill="#1070e0" stroke="#1070e0" stroke-width="0.8" /><path d="M11 6l2.2 .6l-1.4 2.2z M11.5 7l-1.8 1.5" fill="#d0b000" stroke="#d0b000" stroke-width="0.8" /><path d="M12 9l2.2 .6l-1.4 2.2z M12.5 10l-1.8 1.5" fill="#d0b000" stroke="#d0b000" stroke-width="0.8" /><path d="M9 11l2.2 .6l-1.4 2.2z M9.5 12l-1.8 1.5" fill="#d0b000" stroke="#d0b000" stroke-width="0.8" /><path d="M11.5 12l2.2 .6l-1.4 2.2z M12.0 13l-1.8 1.5" fill="#d0b000" stroke="#d0b000" stroke-width="0.8" /></svg>
<svg style="left:479px;top:120px;" width="7" height="4" viewBox="0 0 7 4"><path class="c" d="M0 0h7v1h-1v1h-1v1h-1v1h-1v-1h-1v-1h-1v-1h-1z" fill="#000"/></svg>
<svg style="left:493px;top:114px;" width="16" height="16" viewBox="0 0 16 16"><path d="M7.5 0L14 4V11L7.5 15.5L1 11V4Z" fill="#2020e0" /><path d="M7.5 0L14 4L9.5 5H3.5L1 4Z" fill="#20b0ff" /><path d="M1 11L7.5 15.5L14 11L9.5 12.5H4Z" fill="#101090" /><path d="M1 4V11L4 12.5L3.5 5Z" fill="#1818b8" /><rect class="c" x="5.4" y="7.4" width="5.2" height="2.2" fill="none" stroke="#1818b0" stroke-width="0.8"/></svg>
<svg style="left:511px;top:120px;" width="7" height="4" viewBox="0 0 7 4"><path class="c" d="M0 0h7v1h-1v1h-1v1h-1v1h-1v-1h-1v-1h-1v-1h-1z" fill="#000"/></svg>
<svg style="left:525px;top:114px;" width="16" height="16" viewBox="0 0 16 16"><circle cx="8" cy="8.5" r="6.4" fill="#dceff4" stroke="#9ccfe0" stroke-width="1.1"/><path d="M1.5 15.5L5.5 6.5L10 11L14.5 0.5" fill="none" stroke="#2a88b8" stroke-width="1.9" /><path d="M1.5 15.5L5.5 6.5L10 11L14.5 0.5" fill="none" stroke="#a8e0f4" stroke-width="0.7" /></svg>
<svg style="left:543px;top:120px;" width="7" height="4" viewBox="0 0 7 4"><path class="c" d="M0 0h7v1h-1v1h-1v1h-1v1h-1v-1h-1v-1h-1v-1h-1z" fill="#000"/></svg>
<svg style="left:557px;top:114px;" width="16" height="16" viewBox="0 0 16 16"><path d="M0.5 6.5L6.5 0.5H10L4 6.5Z" fill="#10c010" stroke="#006000" stroke-width="0.6" /><path d="M8.5 4.5H13.5V9H8.5Z" fill="#10b0ff" /><path d="M8.5 4.5L10.5 2.5H15.5L13.5 4.5Z" fill="#60d0ff" /><path d="M13.5 4.5L15.5 2.5V7L13.5 9Z" fill="#0050d0" /><path d="M2.5 12.5L5 10H11L13.5 12.5L11 15H5Z" fill="#e01010" stroke="#800000" stroke-width="0.7" /><path d="M10 12.5L12 11L13.5 12.5L12 14Z" fill="#ffb000" /><line x1="4" y1="12.5" x2="10" y2="12.5" stroke="#ff8080" stroke-width="0.8" /></svg>
<svg style="left:575px;top:120px;" width="7" height="4" viewBox="0 0 7 4"><path class="c" d="M0 0h7v1h-1v1h-1v1h-1v1h-1v-1h-1v-1h-1v-1h-1z" fill="#000"/></svg>
<svg style="left:589px;top:114px;" width="16" height="16" viewBox="0 0 16 16"><circle cx="7.5" cy="7.5" r="6.8" fill="#1c4a98"/><circle cx="7.5" cy="7.5" r="5.6" fill="#3a6cc0"/><circle cx="7.5" cy="7.5" r="4.2" fill="#c8d4ec"/><path d="M4.5 4L11 7L8 8.5L7.5 12Z" fill="#901830" stroke="#600010" stroke-width="0.6" /></svg>
<svg style="left:607px;top:120px;" width="7" height="4" viewBox="0 0 7 4"><path class="c" d="M0 0h7v1h-1v1h-1v1h-1v1h-1v-1h-1v-1h-1v-1h-1z" fill="#000"/></svg>
<svg style="left:621px;top:114px;" width="16" height="16" viewBox="0 0 16 16"><rect class="c" x="1" y="0" width="15" height="13" fill="#d8d8d8" /><line x1="3.5" y1="0" x2="3.5" y2="13" stroke="#f4f4f4" stroke-width="1" /><line x1="1" y1="2.5" x2="16" y2="2.5" stroke="#f4f4f4" stroke-width="1" /><line x1="6.5" y1="0" x2="6.5" y2="13" stroke="#f4f4f4" stroke-width="1" /><line x1="1" y1="5.5" x2="16" y2="5.5" stroke="#f4f4f4" stroke-width="1" /><line x1="9.5" y1="0" x2="9.5" y2="13" stroke="#f4f4f4" stroke-width="1" /><line x1="1" y1="8.5" x2="16" y2="8.5" stroke="#f4f4f4" stroke-width="1" /><line x1="12.5" y1="0" x2="12.5" y2="13" stroke="#f4f4f4" stroke-width="1" /><line x1="1" y1="11.5" x2="16" y2="11.5" stroke="#f4f4f4" stroke-width="1" /><path d="M1.5 11.5L3 10L4 11.5L5.5 9.5L6.5 11L8 7L9.5 1L11 8L12 10.5L13.5 9.5L15 11.5" fill="none" stroke="#e81010" stroke-width="1.2" /><line x1="1" y1="0" x2="1" y2="14" stroke="#000" stroke-width="1.1" /><line x1="0.4" y1="13.5" x2="16" y2="13.5" stroke="#000" stroke-width="1.2" /></svg>
<svg style="left:639px;top:120px;" width="7" height="4" viewBox="0 0 7 4"><path class="c" d="M0 0h7v1h-1v1h-1v1h-1v1h-1v-1h-1v-1h-1v-1h-1z" fill="#000"/></svg>
<svg style="left:653px;top:114px;" width="16" height="16" viewBox="0 0 16 16"><path d="M0.5 2Q4 4.5 8 2.5T15.5 1.5" fill="none" stroke="#1090e0" stroke-width="2.2" /><path d="M1 7Q4 4.5 8 7T15.5 6.5" fill="none" stroke="#1090e0" stroke-width="2.2" /><path d="M1 9.5Q4 12.5 8 10T15.5 10.5" fill="none" stroke="#1090e0" stroke-width="2.2" /><path d="M0.5 14.5Q4 12 8 14T15.5 14" fill="none" stroke="#1090e0" stroke-width="2.2" /><path d="M10.5 7L12.2 8.8L10.5 10.6L8.8 8.8Z" fill="#8010c0" /></svg>
<svg style="left:671px;top:120px;" width="7" height="4" viewBox="0 0 7 4"><path class="c" d="M0 0h7v1h-1v1h-1v1h-1v1h-1v-1h-1v-1h-1v-1h-1z" fill="#000"/></svg>
<svg style="left:685px;top:114px;" width="16" height="16" viewBox="0 0 16 16"><rect class="c" x="1" y="3" width="13" height="10" fill="#4674ff" /><rect class="c" x="2" y="4" width="4" height="2" fill="#d8e4ff" /><rect class="c" x="2" y="7" width="4" height="2" fill="#d8e4ff" /><rect class="c" x="2" y="10" width="4" height="2" fill="#d8e4ff" /><rect class="c" x="9" y="4" width="4" height="2" fill="#d8e4ff" /><rect class="c" x="9" y="7" width="4" height="2" fill="#d8e4ff" /><rect class="c" x="9" y="10" width="4" height="2" fill="#d8e4ff" /><line x1="0.5" y1="13.5" x2="14" y2="13.5" stroke="#000" stroke-width="1" /><path d="M8.5 0L7 3.5L9 6L6 9L8 11L5.5 15.5" fill="none" stroke="#000" stroke-width="1.05" /></svg>
<svg style="left:703px;top:120px;" width="7" height="4" viewBox="0 0 7 4"><path class="c" d="M0 0h7v1h-1v1h-1v1h-1v1h-1v-1h-1v-1h-1v-1h-1z" fill="#000"/></svg>
<svg style="left:717px;top:114px;" width="16" height="16" viewBox="0 0 16 16"><circle cx="8" cy="8" r="7.3" fill="none" stroke="#10b0c0" stroke-width="0.9" stroke-dasharray="1.2 1.2"/><circle cx="4" cy="2.5" r="1.7" fill="#0040b0"/><circle cx="3.796" cy="2.296" r="1.394" fill="#1090ff"/><circle cx="3.49" cy="1.905" r="0.544" fill="#c0f0ff"/><circle cx="11" cy="2" r="1.7" fill="#0040b0"/><circle cx="10.796" cy="1.796" r="1.394" fill="#1090ff"/><circle cx="10.49" cy="1.405" r="0.544" fill="#c0f0ff"/><circle cx="2" cy="7" r="1.7" fill="#0040b0"/><circle cx="1.796" cy="6.796" r="1.394" fill="#1090ff"/><circle cx="1.49" cy="6.405" r="0.544" fill="#c0f0ff"/><circle cx="14" cy="6.5" r="1.7" fill="#0040b0"/><circle cx="13.796" cy="6.296" r="1.394" fill="#1090ff"/><circle cx="13.49" cy="5.905" r="0.544" fill="#c0f0ff"/><circle cx="2.5" cy="12" r="1.7" fill="#0040b0"/><circle cx="2.296" cy="11.796" r="1.394" fill="#1090ff"/><circle cx="1.99" cy="11.405" r="0.544" fill="#c0f0ff"/><circle cx="13.5" cy="11.5" r="1.7" fill="#0040b0"/><circle cx="13.296" cy="11.296" r="1.394" fill="#1090ff"/><circle cx="12.99" cy="10.905" r="0.544" fill="#c0f0ff"/><circle cx="6" cy="14.5" r="1.7" fill="#0040b0"/><circle cx="5.796" cy="14.296" r="1.394" fill="#1090ff"/><circle cx="5.49" cy="13.905" r="0.544" fill="#c0f0ff"/><circle cx="10.5" cy="14.5" r="1.7" fill="#0040b0"/><circle cx="10.296" cy="14.296" r="1.394" fill="#1090ff"/><circle cx="9.99" cy="13.905" r="0.544" fill="#c0f0ff"/><circle cx="8" cy="1.5" r="1.7" fill="#0040b0"/><circle cx="7.796" cy="1.296" r="1.394" fill="#1090ff"/><circle cx="7.49" cy="0.905" r="0.544" fill="#c0f0ff"/><circle cx="6" cy="5.5" r="2.1" fill="#900000"/><circle cx="5.748" cy="5.248" r="1.722" fill="#f01010"/><circle cx="5.37" cy="4.765" r="0.672" fill="#ffc0c0"/><circle cx="10" cy="5" r="2.1" fill="#900000"/><circle cx="9.748" cy="4.748" r="1.722" fill="#f01010"/><circle cx="9.37" cy="4.265" r="0.672" fill="#ffc0c0"/><circle cx="8" cy="8" r="2.1" fill="#900000"/><circle cx="7.748" cy="7.748" r="1.722" fill="#f01010"/><circle cx="7.37" cy="7.265" r="0.672" fill="#ffc0c0"/><circle cx="5.5" cy="10" r="2.1" fill="#900000"/><circle cx="5.248" cy="9.748" r="1.722" fill="#f01010"/><circle cx="4.87" cy="9.265" r="0.672" fill="#ffc0c0"/><circle cx="10.5" cy="10" r="2.1" fill="#900000"/><circle cx="10.248" cy="9.748" r="1.722" fill="#f01010"/><circle cx="9.87" cy="9.265" r="0.672" fill="#ffc0c0"/><circle cx="8" cy="12" r="2.1" fill="#900000"/><circle cx="7.748" cy="11.748" r="1.722" fill="#f01010"/><circle cx="7.37" cy="11.265" r="0.672" fill="#ffc0c0"/></svg>
<svg style="left:735px;top:120px;" width="7" height="4" viewBox="0 0 7 4"><path class="c" d="M0 0h7v1h-1v1h-1v1h-1v1h-1v-1h-1v-1h-1v-1h-1z" fill="#000"/></svg>
<div style="left:748px;top:109px;width:1px;height:26px;background:#a0a0a0;"></div>
<div style="left:749px;top:109px;width:1px;height:26px;background:#ffffff;"></div>
<div style="left:0px;top:135px;width:1072px;height:1px;background:#a0a0a0;"></div>
<div style="left:0px;top:136px;width:181px;height:1px;background:#ffffff;"></div>
<div style="left:5px;top:141px;width:159px;height:17px;background:#bfcddb;"></div>
<span class="t" style="left:9.0px;top:143px;font-size:12px;color:#000;letter-spacing:-0.45px;transform:scaleX(0.977);transform-origin:0 0;">Project</span>
<svg style="left:168px;top:147px;" width="7" height="6" viewBox="0 0 7 6"><line x1="0.6" y1="0.6" x2="5.6" y2="4.8" stroke="#000" stroke-width="1.5" /><line x1="5.6" y1="0.6" x2="0.6" y2="4.8" stroke="#000" stroke-width="1.5" /></svg>
<svg style="left:8px;top:163px;" width="16" height="16" viewBox="0 0 16 16"><path d="M1.5 2.5H7.5L11.5 6.5V14.5H1.5Z" fill="#fff" stroke="#404040" stroke-width="1" /><path d="M2.5 14L11 7.5200000000000005V14Z" fill="#ffffb0" /><path d="M7.5 2.5V6.5H11.5" fill="none" stroke="#404040" stroke-width="1" /><path d="M2 15H12V7" fill="none" stroke="#000" stroke-width="1" /><path d="M9.5 3Q11.5 -0.5 14.5 3" fill="none" stroke="#000" stroke-width="1.1" /><path d="M16 1.5V4.8H12.6Z" fill="#000" /></svg>
<svg style="left:31px;top:163px;" width="16" height="16" viewBox="0 0 16 16"><path d="M1.5 1.5Q6 5 14.5 13.5" fill="none" stroke="#e00000" stroke-width="1.8" /><path d="M14.5 0.5Q7 6 2.5 13" fill="none" stroke="#e00000" stroke-width="1.6" /><path d="M2.5 13L4.5 10" fill="none" stroke="#e04000" stroke-width="2.2" /><rect class="c" x="14" y="14" width="1" height="1" fill="#e00000" /></svg>
<svg style="left:54px;top:163px;" width="16" height="16" viewBox="0 0 16 16"><path d="M0.5 13.5V4.5L2 3H6L7.5 4.5H11.5V13.5Z" fill="#f4f4f4" stroke="#a0a0a0" stroke-width="1.1" /><path d="M12.5 0V8M9 4H16M10 1.5L15 6.5M15 1.5L10 6.5" fill="none" stroke="#b8b8b8" stroke-width="0.9" /></svg>
<div style="left:77px;top:162px;width:1px;height:18px;background:#a0a0a0;"></div>
<svg style="left:85px;top:163px;" width="16" height="16" viewBox="0 0 16 16"><path d="M1.5 0.5H9.5L12.5 3.5V14.5H1.5Z" fill="#fbfbd4" stroke="#707070" stroke-width="1" /><path d="M9.5 0.5V3.5H12.5" fill="#fff" stroke="#404040" stroke-width="0.9" /><line x1="1" y1="15" x2="13.5" y2="15" stroke="#000" stroke-width="1.4" /><line x1="13" y1="3.8" x2="13" y2="15.5" stroke="#000" stroke-width="1.2" /><path d="M9.8 6.2Q7.8 2.8 5 5.2" fill="none" stroke="#008000" stroke-width="1.6" /><path d="M3.2 3.8L4 7.8L7.4 5.6Z" fill="#008000" /><path d="M4.4 9.2Q6.4 12.6 9.2 10.2" fill="none" stroke="#008000" stroke-width="1.6" /><path d="M11 11.6L10.2 7.6L6.8 9.8Z" fill="#008000" /><path d="M4.2 8.6Q3.6 7 4.4 5.6" fill="none" stroke="#00a0a8" stroke-width="1" /><path d="M10 6.8Q10.6 8.4 9.8 9.8" fill="none" stroke="#00a0a8" stroke-width="1" /></svg>
<svg style="left:107px;top:163px;" width="16" height="16" viewBox="0 0 16 16"><text x="0.5" y="6.8" font-size="9" font-weight="bold" font-family="Liberation Serif, serif" fill="#3050ff" textLength="8" lengthAdjust="spacingAndGlyphs">A</text><text x="0.8" y="14.8" font-size="9" font-weight="bold" font-family="Liberation Serif, serif" fill="#800090" textLength="7.5" lengthAdjust="spacingAndGlyphs">Z</text><line x1="12.5" y1="0" x2="12.5" y2="13" stroke="#000" stroke-width="1.2" /><path d="M9.8 10.5H15.2L12.5 15.5Z" fill="#000" /></svg>
<svg style="left:132px;top:169px;" width="7" height="4" viewBox="0 0 7 4"><path class="c" d="M0 0h7v1h-1v1h-1v1h-1v1h-1v-1h-1v-1h-1v-1h-1z" fill="#000"/></svg>
<div style="left:146px;top:162px;width:1px;height:18px;background:#a0a0a0;"></div>
<svg style="left:153px;top:163px;" width="16" height="16" viewBox="0 0 16 16"><path d="M1 2.5L4 4.5V14.5L1 12Z" fill="#008040" stroke="#004020" stroke-width="0.6" /><path d="M15.5 3.5V13.5L8.5 15L4 14.5V13L8.5 13.5L14 12.5" fill="#008040" stroke="#004020" stroke-width="0.6" /><path d="M2 1L4.5 2.5Q6.5 3 7.5 4V13Q6 12 4.5 12L2 10.5Z" fill="#fff" stroke="#708070" stroke-width="0.6" /><path d="M7.5 4Q9.5 1.5 14 2V11.5Q10 11.5 7.5 13Z" fill="#ffffd8" stroke="#708070" stroke-width="0.6" /><path d="M5 4.5L6.5 5.5V11L5 10.5Z" fill="#f8d0a0" /></svg>
<div style="left:5px;top:184px;width:172px;height:598px;background:#ffffff;"></div>
<div style="left:5px;top:184px;width:171px;height:1px;background:#a0a0a0;"></div>
<div style="left:6px;top:185px;width:169px;height:1px;background:#696969;"></div>
<div style="left:5px;top:184px;width:1px;height:597px;background:#a0a0a0;"></div>
<div style="left:6px;top:185px;width:1px;height:595px;background:#696969;"></div>
<div style="left:6px;top:780px;width:170px;height:1px;background:#e3e3e3;"></div>
<div style="left:175px;top:185px;width:1px;height:596px;background:#e3e3e3;"></div>
<div style="left:5px;top:781px;width:172px;height:1px;background:#ffffff;"></div>
<div style="left:176px;top:184px;width:1px;height:598px;background:#ffffff;"></div>
<div style="left:180px;top:137px;width:1px;height:514px;background:#f8f8f8;"></div>
<svg style="left:7px;top:187px;" width="16" height="16" viewBox="0 0 16 16"><rect class="c" x="0.5" y="0.5" width="15" height="15" fill="#fff" stroke="#2b5f96" stroke-width="1"/><rect class="c" x="2" y="2" width="12" height="12" fill="#0094ff" /><rect class="c" x="2" y="5" width="9" height="9" fill="#fff" /><rect class="c" x="2" y="6" width="8" height="8" fill="#2f65a0" /><rect class="c" x="2" y="9" width="5" height="5" fill="#fff" /><rect class="c" x="2" y="10" width="4" height="4" fill="#000" /></svg>
<span class="t" style="left:28px;top:188px;font-size:12px;color:#000;letter-spacing:-0.22px;">AlAs</span>
<svg style="left:15px;top:203px;" width="12" height="12" viewBox="0 0 12 12"><path class="c" d="M0.5 0v11.5h10" fill="none" stroke="#808080" stroke-width="1" stroke-dasharray="1 1"/></svg>
<svg style="left:26px;top:205px;" width="16" height="16" viewBox="0 0 16 16"><path d="M3 2L6 5L10.5 7L13 10M9 2.5L10.5 7M6 11L10 8L9.8 12.5" fill="none" stroke="#909090" stroke-width="0.8" /><circle cx="5.6" cy="4.6" r="1.6" fill="#fff" stroke="#b0b0b0" stroke-width="0.9"/><circle cx="10.3" cy="6.6" r="1.6" fill="#fff" stroke="#b0b0b0" stroke-width="0.9"/><circle cx="6" cy="10.8" r="1.7" fill="#fff" stroke="#b0b0b0" stroke-width="0.9"/><circle cx="9.2" cy="9.5" r="1.4" fill="#fff" stroke="#b0b0b0" stroke-width="0.9"/><circle cx="2.6" cy="1.9" r="1.9" fill="#000"/><circle cx="2.4" cy="1.7" r="1.7" fill="#f00000"/><circle cx="9.2" cy="2.7" r="1.9" fill="#000"/><circle cx="9" cy="2.5" r="1.7" fill="#f00000"/><circle cx="9.9" cy="13" r="1.9" fill="#000"/><circle cx="9.7" cy="12.8" r="1.7" fill="#f00000"/><circle cx="1.9" cy="7.1" r="1.9" fill="#000"/><circle cx="1.7" cy="6.9" r="1.6" fill="#0090ff"/><circle cx="13.3" cy="10" r="1.9" fill="#000"/><circle cx="13.1" cy="9.8" r="1.6" fill="#0090ff"/><circle cx="6.6" cy="6.6" r="0.8" fill="#20c0f0"/></svg>
<div style="left:45px;top:204px;width:49px;height:18px;background:#ececec;"></div>
<span class="t" style="left:47px;top:206px;font-size:12px;color:#000;letter-spacing:-0.29px;">AlAs.xsd</span>
<div style="left:181px;top:136px;width:886px;height:516px;background:#ababab;"></div>
<div style="left:181px;top:136px;width:885px;height:1px;background:#696969;"></div>
<div style="left:181px;top:136px;width:1px;height:515px;background:#a0a0a0;"></div>
<div style="left:182px;top:136px;width:1px;height:514px;background:#696969;"></div>
<div style="left:1065px;top:136px;width:1px;height:515px;background:#e3e3e3;"></div>
<div style="left:1066px;top:135px;width:1px;height:517px;background:#ffffff;"></div>
<div style="left:182px;top:650px;width:884px;height:1px;background:#e3e3e3;"></div>
<div style="left:181px;top:651px;width:886px;height:1px;background:#ffffff;"></div>
<div style="left:195px;top:147px;width:785px;height:465px;box-sizing:border-box;border:1px solid #1c1c1c;border-radius:6px 6px 0 0;background:linear-gradient(#9ab5d3 0px,#a3bddb 14px,#bad2ea 30px,#b9d1ea 31px);overflow:hidden;"><div style="left:0;top:0;width:783px;height:463px;box-sizing:border-box;border-top:1px solid #fdfeff;border-left:1px solid #fdfeff;border-right:1px solid #5fd4f2;border-bottom:1px solid #35d3ee;border-radius:5px 5px 0 0;"></div></div>
<svg style="left:205px;top:158px;" width="16" height="16" viewBox="0 0 16 16"><path d="M3 2L6 5L10.5 7L13 10M9 2.5L10.5 7M6 11L10 8L9.8 12.5" fill="none" stroke="#909090" stroke-width="0.8" /><circle cx="5.6" cy="4.6" r="1.6" fill="#fff" stroke="#b0b0b0" stroke-width="0.9"/><circle cx="10.3" cy="6.6" r="1.6" fill="#fff" stroke="#b0b0b0" stroke-width="0.9"/><circle cx="6" cy="10.8" r="1.7" fill="#fff" stroke="#b0b0b0" stroke-width="0.9"/><circle cx="9.2" cy="9.5" r="1.4" fill="#fff" stroke="#b0b0b0" stroke-width="0.9"/><circle cx="2.6" cy="1.9" r="1.9" fill="#000"/><circle cx="2.4" cy="1.7" r="1.7" fill="#f00000"/><circle cx="9.2" cy="2.7" r="1.9" fill="#000"/><circle cx="9" cy="2.5" r="1.7" fill="#f00000"/><circle cx="9.9" cy="13" r="1.9" fill="#000"/><circle cx="9.7" cy="12.8" r="1.7" fill="#f00000"/><circle cx="1.9" cy="7.1" r="1.9" fill="#000"/><circle cx="1.7" cy="6.9" r="1.6" fill="#0090ff"/><circle cx="13.3" cy="10" r="1.9" fill="#000"/><circle cx="13.1" cy="9.8" r="1.6" fill="#0090ff"/><circle cx="6.6" cy="6.6" r="0.8" fill="#20c0f0"/></svg>
<span class="t" style="left:225px;top:160px;font-size:12px;color:#000;letter-spacing:-0.22px;">AlAs.xsd *</span>
<div style="left:870px;top:157px;width:32px;height:18px;box-sizing:border-box;border:1px solid #5d7594;border-radius:3px;background:linear-gradient(#c9dbee 0,#b6cce6 45%,#9bb7d8 50%,#a5c0df 85%,#bdd3ea 100%);box-shadow:inset 0 0 0 1px rgba(255,255,255,.45);"></div>
<div style="left:904px;top:157px;width:32px;height:18px;box-sizing:border-box;border:1px solid #5d7594;border-radius:3px;background:linear-gradient(#c9dbee 0,#b6cce6 45%,#9bb7d8 50%,#a5c0df 85%,#bdd3ea 100%);box-shadow:inset 0 0 0 1px rgba(255,255,255,.45);"></div>
<div style="left:938px;top:157px;width:32px;height:18px;box-sizing:border-box;border:1px solid #5a1a1a;border-radius:3px;background:linear-gradient(#e9a99b 0,#dc8572 45%,#c5452a 50%,#c9553a 85%,#d98b6f 100%);box-shadow:inset 0 0 0 1px rgba(255,255,255,.45);"></div>
<svg style="left:880px;top:166px;" width="11" height="5" viewBox="0 0 11 5"><rect class="c" x="0.5" y="0.5" width="10" height="4" fill="#f4f4f4" stroke="#4a5568" stroke-width="1"/></svg>
<svg style="left:914px;top:161px;" width="11" height="10" viewBox="0 0 11 10"><rect class="c" x="0.5" y="0.5" width="10" height="9" fill="#f4f4f4" stroke="#4a5568" stroke-width="1"/><rect class="c" x="3.5" y="3.5" width="4" height="3" fill="#8fb0d6" stroke="#4a5568" stroke-width="1"/></svg>
<svg style="left:948px;top:161px;" width="11" height="9" viewBox="0 0 11 9"><path d="M1 1L10 8M10 1L1 8" fill="none" stroke="#4a3038" stroke-width="3.2" stroke-linecap="square"/><path d="M1.3 1.3L9.7 7.7M9.7 1.3L1.3 7.7" fill="none" stroke="#f6f6f6" stroke-width="2" /></svg>
<div style="left:197px;top:179px;width:6px;height:90px;background:linear-gradient(#b2cbe7,#c4d8ee 60%,#dfeaf6);"></div>
<div style="left:972px;top:179px;width:6px;height:90px;background:linear-gradient(#b2cbe7,#c4d8ee 60%,#dfeaf6);"></div>
<div style="left:203px;top:179px;width:769px;height:425px;background:#000;"></div>
<div style="left:203px;top:179px;width:1px;height:425px;background:#9fb3c8;"></div>
<div style="left:204px;top:179px;width:1px;height:425px;background:#707070;"></div>
<div style="left:203px;top:179px;width:769px;height:1px;background:#8f8f8f;"></div>
<div style="left:970px;top:180px;width:1px;height:424px;background:#ffffff;"></div>
<div style="left:971px;top:179px;width:1px;height:425px;background:#ffffff;"></div>
<div style="left:204px;top:602px;width:768px;height:1px;background:#ffffff;"></div>
<div style="left:203px;top:603px;width:769px;height:1px;background:#ffffff;"></div>
<svg style="left:465px;top:273px;" width="241" height="241" viewBox="0 0 241 241"><rect x="1.5" y="1.5" width="238" height="238" fill="none" stroke="#e6e6e6" stroke-width="2.6"/></svg>
<span class="t" style="left:466px;top:258px;font-size:18px;color:#ffff00;letter-spacing:0px;font-family:'DejaVu Sans Light','DejaVu Sans',sans-serif;font-weight:200;-webkit-text-stroke:0.35px currentColor;will-change:transform;">B</span>
<span class="t" style="left:707px;top:501px;font-size:18px;color:#ff0000;letter-spacing:0px;font-family:'DejaVu Sans Light','DejaVu Sans',sans-serif;font-weight:200;-webkit-text-stroke:0.35px currentColor;will-change:transform;">A</span>
<span class="t" style="left:465.0px;top:501px;font-size:18px;color:#00ff00;letter-spacing:0px;font-family:'DejaVu Sans Light','DejaVu Sans',sans-serif;font-weight:200;-webkit-text-stroke:0.35px currentColor;will-change:transform;transform:scaleX(0.955);transform-origin:0 0;">C</span>
<span class="t" style="left:470.6px;top:496px;font-size:18px;color:#ffffff;letter-spacing:0px;font-family:'DejaVu Sans Light','DejaVu Sans',sans-serif;font-weight:200;-webkit-text-stroke:0.35px currentColor;will-change:transform;transform:scaleX(0.917);transform-origin:0 0;">O</span>
<span class="t" style="left:925.0px;top:525px;font-size:14px;color:#00ff00;letter-spacing:0px;font-family:'DejaVu Sans Light','DejaVu Sans',sans-serif;font-weight:200;-webkit-text-stroke:0.35px currentColor;will-change:transform;transform:scaleX(0.944);transform-origin:0 0;">Y</span>
<span class="t" style="left:957.0px;top:556px;font-size:14px;color:#ffffff;letter-spacing:0px;font-family:'DejaVu Sans Light','DejaVu Sans',sans-serif;font-weight:200;-webkit-text-stroke:0.35px currentColor;will-change:transform;transform:scaleX(0.944);transform-origin:0 0;">X</span>
<svg style="left:922px;top:540px;" width="36" height="34" viewBox="0 0 36 34"><defs><linearGradient id="ga" x1="0" x2="0" y1="0" y2="1"><stop offset="0" stop-color="#fff"/><stop offset="1" stop-color="#8a8a8a"/></linearGradient></defs><line x1="8.5" y1="14" x2="8.5" y2="25" stroke="#00e000" stroke-width="2" /><line x1="9.6" y1="14" x2="9.6" y2="25" stroke="#e8e8e8" stroke-width="1" /><path d="M8.5 4L11.6 14H5.4z" fill="#00e000"/><line x1="11" y1="27.5" x2="22" y2="27.5" stroke="#f0f0f0" stroke-width="2" /><path d="M21 23.7L31.5 27.5L21 31z" fill="url(#ga)"/><circle cx="8.2" cy="27.6" r="3.2" fill="#000" stroke="#e8e8e8" stroke-width="1"/><ellipse cx="8.2" cy="28.2" rx="2.6" ry="1.8" fill="#a000a0"/></svg>
<span class="t" style="left:925.5px;top:555px;font-size:12px;color:#ff00ff;letter-spacing:0px;font-family:'DejaVu Sans Light','DejaVu Sans',sans-serif;font-weight:200;-webkit-text-stroke:0.35px currentColor;will-change:transform;">Z</span>
<svg style="left:186px;top:659px;" width="7" height="6" viewBox="0 0 7 6"><line x1="0.6" y1="0.6" x2="5.6" y2="4.8" stroke="#000" stroke-width="1.5" /><line x1="5.6" y1="0.6" x2="0.6" y2="4.8" stroke="#000" stroke-width="1.5" /></svg>
<div style="left:181px;top:668px;width:17px;height:112px;background:#bfcddb;"></div>
<span class="t" style="left:183px;top:775px;font-size:12px;transform-origin:0 0;transform:rotate(-90deg);letter-spacing:-0.45px;">Jobs</span>
<svg style="left:203px;top:652px;" width="16" height="9" viewBox="0 0 16 9"><rect class="c" x="0" y="7" width="16" height="1" fill="#000" /><rect class="c" x="15" y="4" width="1" height="4" fill="#000" /><rect class="c" x="0" y="4" width="1" height="4" fill="#000" /><rect class="c" x="1" y="4" width="3" height="1" fill="#2040ff" /><rect class="c" x="6" y="4" width="3" height="1" fill="#2040ff" /><rect class="c" x="11" y="4" width="3" height="1" fill="#2040ff" /></svg>
<svg style="left:203px;top:667px;" width="16" height="16" viewBox="0 0 16 16"><path d="M1.5 0.5H9.5L12.5 3.5V14.5H1.5Z" fill="#fbfbd4" stroke="#707070" stroke-width="1" /><path d="M9.5 0.5V3.5H12.5" fill="#fff" stroke="#404040" stroke-width="0.9" /><line x1="1" y1="15" x2="13.5" y2="15" stroke="#000" stroke-width="1.4" /><line x1="13" y1="3.8" x2="13" y2="15.5" stroke="#000" stroke-width="1.2" /><path d="M9.8 6.2Q7.8 2.8 5 5.2" fill="none" stroke="#008000" stroke-width="1.6" /><path d="M3.2 3.8L4 7.8L7.4 5.6Z" fill="#008000" /><path d="M4.4 9.2Q6.4 12.6 9.2 10.2" fill="none" stroke="#008000" stroke-width="1.6" /><path d="M11 11.6L10.2 7.6L6.8 9.8Z" fill="#008000" /><path d="M4.2 8.6Q3.6 7 4.4 5.6" fill="none" stroke="#00a0a8" stroke-width="1" /><path d="M10 6.8Q10.6 8.4 9.8 9.8" fill="none" stroke="#00a0a8" stroke-width="1" /></svg>
<div style="left:202px;top:689px;width:34px;height:1px;background:#a0a0a0;"></div>
<svg style="left:203px;top:697px;" width="16" height="16" viewBox="0 0 16 16"><path d="M1.5 5.5H9L12.5 8V14.5H1.5Z" fill="#f4f4f4" stroke="#a0a0a0" stroke-width="1.1" /><line x1="3" y1="9.5" x2="9" y2="9.5" stroke="#a0a0a0" stroke-width="1" /><line x1="3" y1="11.5" x2="9" y2="11.5" stroke="#a0a0a0" stroke-width="1" /><path d="M4 6L9 1.5H14V4L10 8Z" fill="#f4f4f4" stroke="#a0a0a0" stroke-width="1" /><line x1="6" y1="4" x2="10" y2="7" stroke="#a0a0a0" stroke-width="0.8" /><path d="M14 1Q16 1 16 3" fill="none" stroke="#a0a0a0" stroke-width="1" /></svg>
<svg style="left:203px;top:719px;" width="16" height="16" viewBox="0 0 16 16"><path d="M2.5 3.5H13.5V14.5H2.5Z" stroke-linejoin="round" fill="#f4f4f4" stroke="#a0a0a0" stroke-width="1.1" /><path d="M5.5 3.5V1.5H10.5V3.5" fill="none" stroke="#a0a0a0" stroke-width="1.1" /><line x1="2.5" y1="9" x2="13.5" y2="9" stroke="#a0a0a0" stroke-width="1" /><circle cx="8" cy="9" r="2.4" fill="#f4f4f4" stroke="#a0a0a0" stroke-width="1"/><line x1="5.5" y1="6.5" x2="10.5" y2="6.5" stroke="#a0a0a0" stroke-width="1" /></svg>
<svg style="left:203px;top:741px;" width="16" height="16" viewBox="0 0 16 16"><path d="M4.5 8V3.5Q5.3 2.3 6.2 3.5V1.8Q7 0.6 8 1.8V1.5Q9 0.3 9.8 1.8V3Q10.8 2 11.5 3.5V10Q11.5 14 8 14.2Q5.5 14.2 4 12L1 8.5Q1.5 7 3 8Z" fill="#f8f8f8" stroke="#a0a0a0" stroke-width="1" /><line x1="6.2" y1="3.5" x2="6.2" y2="7.5" stroke="#a0a0a0" stroke-width="0.9" /><line x1="8" y1="2" x2="8" y2="7.5" stroke="#a0a0a0" stroke-width="0.9" /><line x1="9.8" y1="3" x2="9.8" y2="7.5" stroke="#a0a0a0" stroke-width="0.9" /></svg>
<svg style="left:202px;top:763px;" width="16" height="16" viewBox="0 0 16 16"><rect class="c" x="2.55" y="1.55" width="11.9" height="9.9" fill="#f8f8f8" stroke="#a0a0a0" stroke-width="1.1"/><line x1="2" y1="3.5" x2="15" y2="3.5" stroke="#a0a0a0" stroke-width="1" /><path d="M4 10L8 6L10 8L13 4.5" fill="none" stroke="#a0a0a0" stroke-width="1" stroke-dasharray="2 1"/><circle cx="2.5" cy="13.5" r="1.6" fill="#f4f4f4" stroke="#a0a0a0" stroke-width="1"/><circle cx="7" cy="13.5" r="1.6" fill="#f4f4f4" stroke="#a0a0a0" stroke-width="1"/><line x1="4" y1="13.5" x2="5.5" y2="13.5" stroke="#a0a0a0" stroke-width="1" /><path d="M7.5 12.5L10 10" fill="none" stroke="#a0a0a0" stroke-width="1" /></svg>
<div style="left:240px;top:656px;width:827px;height:126px;background:#ffffff;"></div>
<div style="left:240px;top:656px;width:826px;height:1px;background:#a0a0a0;"></div>
<div style="left:241px;top:657px;width:824px;height:1px;background:#696969;"></div>
<div style="left:240px;top:656px;width:1px;height:125px;background:#a0a0a0;"></div>
<div style="left:241px;top:657px;width:1px;height:123px;background:#696969;"></div>
<div style="left:241px;top:780px;width:825px;height:1px;background:#e3e3e3;"></div>
<div style="left:240px;top:781px;width:827px;height:1px;background:#ffffff;"></div>
<div style="left:1065px;top:657px;width:1px;height:124px;background:#e3e3e3;"></div>
<div style="left:1066px;top:656px;width:1px;height:126px;background:#ffffff;"></div>
<div style="left:242px;top:658px;width:823px;height:19px;background:#f0f0f0;"></div>
<div style="left:242px;top:658px;width:75px;height:1px;background:#ffffff;"></div>
<div style="left:242px;top:658px;width:1px;height:19px;background:#ffffff;"></div>
<div style="left:243px;top:675px;width:74px;height:1px;background:#a0a0a0;"></div>
<div style="left:315px;top:659px;width:1px;height:17px;background:#a0a0a0;"></div>
<div style="left:242px;top:676px;width:75px;height:1px;background:#696969;"></div>
<div style="left:316px;top:658px;width:1px;height:19px;background:#696969;"></div>
<span class="t" style="left:248px;top:661px;font-size:12px;color:#000;letter-spacing:0.07px;">Description</span>
<div style="left:317px;top:658px;width:75px;height:1px;background:#ffffff;"></div>
<div style="left:317px;top:658px;width:1px;height:19px;background:#ffffff;"></div>
<div style="left:318px;top:675px;width:74px;height:1px;background:#a0a0a0;"></div>
<div style="left:390px;top:659px;width:1px;height:17px;background:#a0a0a0;"></div>
<div style="left:317px;top:676px;width:75px;height:1px;background:#696969;"></div>
<div style="left:391px;top:658px;width:1px;height:19px;background:#696969;"></div>
<span class="t" style="left:323px;top:661px;font-size:12px;color:#000;letter-spacing:-0.4px;">Job Id</span>
<div style="left:392px;top:658px;width:75px;height:1px;background:#ffffff;"></div>
<div style="left:392px;top:658px;width:1px;height:19px;background:#ffffff;"></div>
<div style="left:393px;top:675px;width:74px;height:1px;background:#a0a0a0;"></div>
<div style="left:465px;top:659px;width:1px;height:17px;background:#a0a0a0;"></div>
<div style="left:392px;top:676px;width:75px;height:1px;background:#696969;"></div>
<div style="left:466px;top:658px;width:1px;height:19px;background:#696969;"></div>
<span class="t" style="left:398.0px;top:661px;font-size:12px;color:#000;letter-spacing:-0.45px;transform:scaleX(0.985);transform-origin:0 0;">Gateway</span>
<div style="left:467px;top:658px;width:75px;height:1px;background:#ffffff;"></div>
<div style="left:467px;top:658px;width:1px;height:19px;background:#ffffff;"></div>
<div style="left:468px;top:675px;width:74px;height:1px;background:#a0a0a0;"></div>
<div style="left:540px;top:659px;width:1px;height:17px;background:#a0a0a0;"></div>
<div style="left:467px;top:676px;width:75px;height:1px;background:#696969;"></div>
<div style="left:541px;top:658px;width:1px;height:19px;background:#696969;"></div>
<span class="t" style="left:473.0px;top:661px;font-size:12px;color:#000;letter-spacing:-0.45px;transform:scaleX(0.982);transform-origin:0 0;">Server</span>
<div style="left:542px;top:658px;width:75px;height:1px;background:#ffffff;"></div>
<div style="left:542px;top:658px;width:1px;height:19px;background:#ffffff;"></div>
<div style="left:543px;top:675px;width:74px;height:1px;background:#a0a0a0;"></div>
<div style="left:615px;top:659px;width:1px;height:17px;background:#a0a0a0;"></div>
<div style="left:542px;top:676px;width:75px;height:1px;background:#696969;"></div>
<div style="left:616px;top:658px;width:1px;height:19px;background:#696969;"></div>
<span class="t" style="left:548px;top:661px;font-size:12px;color:#000;letter-spacing:-0.4px;">Status</span>
<div style="left:617px;top:658px;width:75px;height:1px;background:#ffffff;"></div>
<div style="left:617px;top:658px;width:1px;height:19px;background:#ffffff;"></div>
<div style="left:618px;top:675px;width:74px;height:1px;background:#a0a0a0;"></div>
<div style="left:690px;top:659px;width:1px;height:17px;background:#a0a0a0;"></div>
<div style="left:617px;top:676px;width:75px;height:1px;background:#696969;"></div>
<div style="left:691px;top:658px;width:1px;height:19px;background:#696969;"></div>
<span class="t" style="left:623px;top:661px;font-size:12px;color:#000;letter-spacing:-0.36px;">Progress</span>
<div style="left:692px;top:658px;width:75px;height:1px;background:#ffffff;"></div>
<div style="left:692px;top:658px;width:1px;height:19px;background:#ffffff;"></div>
<div style="left:693px;top:675px;width:74px;height:1px;background:#a0a0a0;"></div>
<div style="left:765px;top:659px;width:1px;height:17px;background:#a0a0a0;"></div>
<div style="left:692px;top:676px;width:75px;height:1px;background:#696969;"></div>
<div style="left:766px;top:658px;width:1px;height:19px;background:#696969;"></div>
<span class="t" style="left:698px;top:661px;font-size:12px;color:#000;letter-spacing:-0.36px;">Start Time</span>
<div style="left:767px;top:658px;width:75px;height:1px;background:#ffffff;"></div>
<div style="left:767px;top:658px;width:1px;height:19px;background:#ffffff;"></div>
<div style="left:768px;top:675px;width:74px;height:1px;background:#a0a0a0;"></div>
<div style="left:840px;top:659px;width:1px;height:17px;background:#a0a0a0;"></div>
<div style="left:767px;top:676px;width:75px;height:1px;background:#696969;"></div>
<div style="left:841px;top:658px;width:1px;height:19px;background:#696969;"></div>
<span class="t" style="left:773px;top:661px;font-size:12px;color:#000;letter-spacing:-0.45px;">Results Fo...</span>
<div style="left:842px;top:658px;width:223px;height:1px;background:#ffffff;"></div>
<div style="left:842px;top:658px;width:1px;height:19px;background:#ffffff;"></div>
<div style="left:843px;top:675px;width:222px;height:1px;background:#a0a0a0;"></div>
<div style="left:842px;top:676px;width:223px;height:1px;background:#696969;"></div>
<span class="t" style="left:4.0px;top:786px;font-size:12px;color:#000;letter-spacing:-0.45px;transform:scaleX(0.927);transform-origin:0 0;">Ready</span>
<div style="left:818px;top:784px;width:134px;height:1px;background:#a0a0a0;"></div>
<div style="left:818px;top:784px;width:1px;height:17px;background:#a0a0a0;"></div>
<div style="left:818px;top:800px;width:134px;height:1px;background:#ffffff;"></div>
<div style="left:951px;top:784px;width:1px;height:17px;background:#ffffff;"></div>
<div style="left:954px;top:784px;width:28px;height:1px;background:#a0a0a0;"></div>
<div style="left:954px;top:784px;width:1px;height:17px;background:#a0a0a0;"></div>
<div style="left:954px;top:800px;width:28px;height:1px;background:#ffffff;"></div>
<div style="left:981px;top:784px;width:1px;height:17px;background:#ffffff;"></div>
<div style="left:984px;top:784px;width:34px;height:1px;background:#a0a0a0;"></div>
<div style="left:984px;top:784px;width:1px;height:17px;background:#a0a0a0;"></div>
<div style="left:984px;top:800px;width:34px;height:1px;background:#ffffff;"></div>
<div style="left:1017px;top:784px;width:1px;height:17px;background:#ffffff;"></div>
<div style="left:1020px;top:784px;width:32px;height:1px;background:#a0a0a0;"></div>
<div style="left:1020px;top:784px;width:1px;height:17px;background:#a0a0a0;"></div>
<div style="left:1020px;top:800px;width:32px;height:1px;background:#ffffff;"></div>
<div style="left:1051px;top:784px;width:1px;height:17px;background:#ffffff;"></div>
<span class="t" style="left:987px;top:786px;font-size:12px;color:#000;letter-spacing:-0.37px;">NUM</span>
<svg style="left:1058px;top:788px;" width="13" height="13" viewBox="0 0 13 13"><line x1="12.5" y1="1.5" x2="1.5" y2="12.5" stroke="#a0a0a0" stroke-width="1" /><line x1="12.5" y1="2.5" x2="2.5" y2="12.5" stroke="#ffffff" stroke-width="1" /><line x1="12.5" y1="5.5" x2="5.5" y2="12.5" stroke="#a0a0a0" stroke-width="1" /><line x1="12.5" y1="6.5" x2="6.5" y2="12.5" stroke="#ffffff" stroke-width="1" /><line x1="12.5" y1="9.5" x2="9.5" y2="12.5" stroke="#a0a0a0" stroke-width="1" /><line x1="12.5" y1="10.5" x2="10.5" y2="12.5" stroke="#ffffff" stroke-width="1" /></svg>
<div style="left:0px;top:0px;width:1072px;height:1px;background:#0078d7;"></div>
<div style="left:0px;top:801px;width:1072px;height:1px;background:#0078d7;"></div>
<div style="left:0px;top:0px;width:1px;height:802px;background:#0078d7;"></div>
<div style="left:1071px;top:0px;width:1px;height:802px;background:#0078d7;"></div>
</div></body></html>
